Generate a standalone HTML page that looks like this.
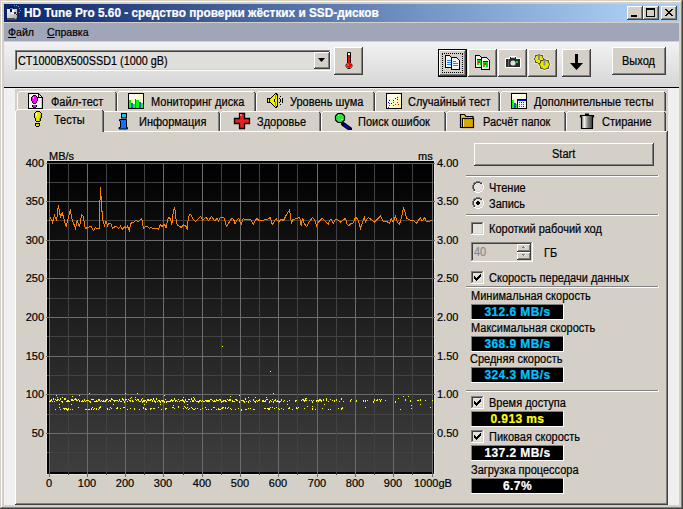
<!DOCTYPE html><html><head><meta charset="utf-8"><style>
html,body{margin:0;padding:0;width:683px;height:509px;overflow:hidden;background:#d4d0c8}
div{position:absolute;box-sizing:border-box}
.t{white-space:pre;font-family:"Liberation Sans",sans-serif;line-height:13px;-webkit-text-stroke:0.2px currentColor}
</style></head><body><div style="left:0px;top:0px;width:683px;height:509px;background:#404040;"></div><div style="left:0px;top:0px;width:682px;height:508px;background:#d4d0c8;"></div><div style="left:1px;top:1px;width:681px;height:507px;background:#808080;"></div><div style="left:1px;top:1px;width:680px;height:506px;background:#ffffff;"></div><div style="left:2px;top:2px;width:679px;height:505px;background:#d4d0c8;"></div><div style="left:4px;top:4px;width:675px;height:18px;background:linear-gradient(to right,#0a246a 0px,#a6caf0 620px);"></div><svg style="position:absolute;left:5px;top:5px" width="17" height="16" viewBox="0 0 17 16" shape-rendering="crispEdges"><defs><linearGradient id="ai" x1="0" y1="0" x2="1" y2="1"><stop offset="0" stop-color="#f4f4f4"/><stop offset="1" stop-color="#a8a8a8"/></linearGradient></defs><rect x="2" y="4" width="10" height="10" fill="url(#ai)"/><rect x="2" y="13" width="10" height="2" fill="#4a4a4a"/><rect x="10" y="13" width="1" height="1" fill="#c0c040"/><rect x="4" y="2" width="5" height="2" fill="#101018"/><rect x="5" y="3" width="3" height="1" fill="#5878c8"/><rect x="5" y="4" width="2" height="3" fill="#181818"/><rect x="7" y="5" width="2" height="2" fill="#ffffff"/><rect x="6" y="8" width="3" height="1" fill="#ffffff"/><rect x="9" y="7" width="2" height="2" fill="#303030"/><rect x="11" y="9" width="1" height="1" fill="#202020"/><rect x="13" y="10" width="1" height="1" fill="#202020"/><rect x="12" y="9" width="1" height="1" fill="#404080"/><rect x="9" y="0" width="1" height="1" fill="#9098b0"/><rect x="11" y="0" width="1" height="1" fill="#9098b0"/><rect x="13" y="1" width="1" height="1" fill="#9098b0"/><rect x="14" y="3" width="1" height="1" fill="#9098b0"/><rect x="15" y="5" width="1" height="1" fill="#9098b0"/><rect x="14" y="7" width="1" height="1" fill="#9098b0"/></svg><div class="t" style="left:24px;top:7px;font-size:12.3px;transform:scaleX(0.961);transform-origin:0 0;color:#fff;font-weight:700">HD Tune Pro 5.60 - средство проверки жёстких и SSD-дисков</div><div style="left:627px;top:6px;width:16px;height:14px;background:#404040;"></div><div style="left:627px;top:6px;width:15px;height:13px;background:#ffffff;"></div><div style="left:628px;top:7px;width:14px;height:12px;background:#808080;"></div><div style="left:628px;top:7px;width:13px;height:11px;background:#d4d0c8;"></div><div style="left:643px;top:6px;width:16px;height:14px;background:#404040;"></div><div style="left:643px;top:6px;width:15px;height:13px;background:#ffffff;"></div><div style="left:644px;top:7px;width:14px;height:12px;background:#808080;"></div><div style="left:644px;top:7px;width:13px;height:11px;background:#d4d0c8;"></div><div style="left:661px;top:6px;width:16px;height:14px;background:#404040;"></div><div style="left:661px;top:6px;width:15px;height:13px;background:#ffffff;"></div><div style="left:662px;top:7px;width:14px;height:12px;background:#808080;"></div><div style="left:662px;top:7px;width:13px;height:11px;background:#d4d0c8;"></div><div style="left:631px;top:15px;width:6px;height:2px;background:#000;"></div><div style="left:646px;top:8px;width:9px;height:9px;background:#000;"></div><div style="left:647px;top:10px;width:7px;height:6px;background:#d4d0c8;"></div><svg style="position:absolute;left:665px;top:9px" width="8" height="7" viewBox="0 0 8 7" shape-rendering="crispEdges"><rect x="0" y="0" width="1" height="1" fill="#000"/><rect x="1" y="0" width="1" height="1" fill="#000"/><rect x="6" y="0" width="1" height="1" fill="#000"/><rect x="7" y="0" width="1" height="1" fill="#000"/><rect x="1" y="1" width="1" height="1" fill="#000"/><rect x="2" y="1" width="1" height="1" fill="#000"/><rect x="5" y="1" width="1" height="1" fill="#000"/><rect x="6" y="1" width="1" height="1" fill="#000"/><rect x="2" y="2" width="1" height="1" fill="#000"/><rect x="3" y="2" width="1" height="1" fill="#000"/><rect x="4" y="2" width="1" height="1" fill="#000"/><rect x="5" y="2" width="1" height="1" fill="#000"/><rect x="3" y="3" width="1" height="1" fill="#000"/><rect x="4" y="3" width="1" height="1" fill="#000"/><rect x="2" y="4" width="1" height="1" fill="#000"/><rect x="3" y="4" width="1" height="1" fill="#000"/><rect x="4" y="4" width="1" height="1" fill="#000"/><rect x="5" y="4" width="1" height="1" fill="#000"/><rect x="1" y="5" width="1" height="1" fill="#000"/><rect x="2" y="5" width="1" height="1" fill="#000"/><rect x="5" y="5" width="1" height="1" fill="#000"/><rect x="6" y="5" width="1" height="1" fill="#000"/><rect x="0" y="6" width="1" height="1" fill="#000"/><rect x="1" y="6" width="1" height="1" fill="#000"/><rect x="6" y="6" width="1" height="1" fill="#000"/><rect x="7" y="6" width="1" height="1" fill="#000"/></svg><div style="left:4px;top:23px;width:675px;height:18px;background:#a0a6b8;"></div><div class="t" style="left:8px;top:26px;font-size:10.6px;color:#000;font-weight:400;"><u>Ф</u>айл</div><div class="t" style="left:47px;top:26px;font-size:10.6px;color:#000;font-weight:400;"><u>С</u>правка</div><div style="left:4px;top:41px;width:675px;height:1px;background:#d4d0c8;"></div><div style="left:4px;top:42px;width:675px;height:45px;background:linear-gradient(to bottom,#f2f2f2,#d6d6d6);"></div><div style="left:4px;top:87px;width:675px;height:1px;background:#000;"></div><div style="left:15px;top:50px;width:316px;height:21px;background:#ffffff;"></div><div style="left:15px;top:50px;width:315px;height:20px;background:#808080;"></div><div style="left:16px;top:51px;width:314px;height:19px;background:#d4d0c8;"></div><div style="left:16px;top:51px;width:313px;height:18px;background:#404040;"></div><div style="left:17px;top:52px;width:312px;height:17px;background:#e0deda;"></div><div class="t" style="left:18px;top:55px;font-size:12px;transform:scaleX(0.9);transform-origin:0 0;color:#000;font-weight:400;">CT1000BX500SSD1 (1000 gB)</div><div style="left:314px;top:52px;width:16px;height:17px;background:#404040;"></div><div style="left:314px;top:52px;width:15px;height:16px;background:#ffffff;"></div><div style="left:315px;top:53px;width:14px;height:15px;background:#808080;"></div><div style="left:315px;top:53px;width:13px;height:14px;background:#d4d0c8;"></div><svg style="position:absolute;left:318px;top:58px" width="7" height="4" viewBox="0 0 7 4"><path d="M0 0h7L3.5 4z" fill="#000"/></svg><div style="left:334px;top:47px;width:29px;height:28px;background:#404040;"></div><div style="left:334px;top:47px;width:28px;height:27px;background:#ffffff;"></div><div style="left:335px;top:48px;width:27px;height:26px;background:#808080;"></div><div style="left:335px;top:48px;width:26px;height:25px;background:#d4d0c8;"></div><svg style="position:absolute;left:344px;top:51px" width="10" height="19" viewBox="0 0 10 19"><path d="M3.5 1.5h3v10.5a3 3 0 1 1 -3 0z" fill="#fff" stroke="#000" stroke-width="1"/><rect x="4" y="4" width="2" height="9" fill="#ff0000"/><circle cx="5" cy="14.5" r="2.5" fill="#ff0000"/><rect x="3.5" y="13.5" width="1" height="1" fill="#fff"/></svg><div style="left:438px;top:49px;width:29px;height:28px;background:#000;"></div><div style="left:439px;top:50px;width:27px;height:26px;background:#404040;"></div><div style="left:439px;top:50px;width:26px;height:25px;background:#ffffff;"></div><div style="left:440px;top:51px;width:25px;height:24px;background:#808080;"></div><div style="left:440px;top:51px;width:24px;height:23px;background:#d4d0c8;"></div><div style="left:442px;top:53px;width:21px;height:20px;border:1px dotted #000"></div><div style="left:468px;top:49px;width:29px;height:28px;background:#404040;"></div><div style="left:468px;top:49px;width:28px;height:27px;background:#ffffff;"></div><div style="left:469px;top:50px;width:27px;height:26px;background:#808080;"></div><div style="left:469px;top:50px;width:26px;height:25px;background:#d4d0c8;"></div><div style="left:498px;top:49px;width:29px;height:28px;background:#404040;"></div><div style="left:498px;top:49px;width:28px;height:27px;background:#ffffff;"></div><div style="left:499px;top:50px;width:27px;height:26px;background:#808080;"></div><div style="left:499px;top:50px;width:26px;height:25px;background:#d4d0c8;"></div><div style="left:528px;top:49px;width:29px;height:28px;background:#404040;"></div><div style="left:528px;top:49px;width:28px;height:27px;background:#ffffff;"></div><div style="left:529px;top:50px;width:27px;height:26px;background:#808080;"></div><div style="left:529px;top:50px;width:26px;height:25px;background:#d4d0c8;"></div><div style="left:562px;top:49px;width:29px;height:28px;background:#404040;"></div><div style="left:562px;top:49px;width:28px;height:27px;background:#ffffff;"></div><div style="left:563px;top:50px;width:27px;height:26px;background:#808080;"></div><div style="left:563px;top:50px;width:26px;height:25px;background:#d4d0c8;"></div><div style="left:612px;top:47px;width:54px;height:28px;background:#404040;"></div><div style="left:612px;top:47px;width:53px;height:27px;background:#ffffff;"></div><div style="left:613px;top:48px;width:52px;height:26px;background:#808080;"></div><div style="left:613px;top:48px;width:51px;height:25px;background:#d4d0c8;"></div><div class="t" style="left:622px;top:55px;font-size:12px;transform:scaleX(0.917);transform-origin:0 0;color:#000;font-weight:400;">Выход</div><svg style="position:absolute;left:444px;top:55px" width="18" height="16" viewBox="0 0 18 16" shape-rendering="crispEdges"><path d="M1.5 0.5h4l3 3v9h-7z" fill="#f4f4f4" stroke="#000"/><rect x="3" y="5" width="4" height="1" fill="#2080ff"/><rect x="3" y="7" width="4" height="1" fill="#2080ff"/><rect x="3" y="9" width="4" height="1" fill="#2080ff"/><path d="M7.5 2.5h5l3 3v9h-8z" fill="#f4f4f4" stroke="#000"/><rect x="9" y="6" width="3" height="1" fill="#2080ff"/><rect x="9" y="8" width="5" height="1" fill="#2080ff"/><rect x="9" y="10" width="5" height="1" fill="#2080ff"/></svg><svg style="position:absolute;left:474px;top:55px" width="18" height="16" viewBox="0 0 18 16" shape-rendering="crispEdges"><path d="M1.5 0.5h4l3 3v9h-7z" fill="#f4f4f4" stroke="#000"/><rect x="3" y="4" width="4" height="1" fill="#0000ff"/><rect x="3" y="5" width="4" height="5" fill="#00e000"/><rect x="4" y="6" width="2" height="2" fill="#ff2000"/><rect x="5" y="8" width="1" height="2" fill="#f0f000"/><path d="M7.5 2.5h5l3 3v9h-8z" fill="#f4f4f4" stroke="#000"/><rect x="9" y="6" width="5" height="1" fill="#0000ff"/><rect x="9" y="7" width="5" height="5" fill="#00e000"/><rect x="10" y="8" width="2" height="2" fill="#ff2000"/><rect x="11" y="10" width="1" height="2" fill="#f0f000"/></svg><svg style="position:absolute;left:503px;top:54px" width="20" height="16" viewBox="0 0 20 16"><path d="M2 4h4l1-2h6l1 2h4v10H2z" fill="#fff"/><rect x="3" y="5" width="14" height="8" fill="#2a2a2a"/><rect x="7" y="3" width="6" height="2" fill="#2a2a2a"/><rect x="8" y="3" width="4" height="1" fill="#cfcfcf"/><rect x="5" y="5" width="1" height="8" fill="#666"/><circle cx="10" cy="9" r="2.6" fill="#e0e0e0"/><rect x="13" y="7" width="2" height="2" fill="#00e020"/></svg><svg style="position:absolute;left:532px;top:53px" width="20" height="19" viewBox="0 0 20 19"><polygon points="12.20,6.00 10.60,7.49 10.68,9.68 8.49,9.60 7.00,11.20 5.51,9.60 3.32,9.68 3.40,7.49 1.80,6.00 3.40,4.51 3.32,2.32 5.51,2.40 7.00,0.80 8.49,2.40 10.68,2.32 10.60,4.51" fill="#fff" stroke="#fff" stroke-width="2"/><polygon points="18.10,11.50 16.38,13.11 16.46,15.46 14.11,15.38 12.50,17.10 10.89,15.38 8.54,15.46 8.62,13.11 6.90,11.50 8.62,9.89 8.54,7.54 10.89,7.62 12.50,5.90 14.11,7.62 16.46,7.54 16.38,9.89" fill="#fff" stroke="#fff" stroke-width="2"/><polygon points="12.20,6.00 10.60,7.49 10.68,9.68 8.49,9.60 7.00,11.20 5.51,9.60 3.32,9.68 3.40,7.49 1.80,6.00 3.40,4.51 3.32,2.32 5.51,2.40 7.00,0.80 8.49,2.40 10.68,2.32 10.60,4.51" fill="#e8e800" stroke="#303000" stroke-width="0.9"/><polygon points="18.10,11.50 16.38,13.11 16.46,15.46 14.11,15.38 12.50,17.10 10.89,15.38 8.54,15.46 8.62,13.11 6.90,11.50 8.62,9.89 8.54,7.54 10.89,7.62 12.50,5.90 14.11,7.62 16.46,7.54 16.38,9.89" fill="#e8e800" stroke="#303000" stroke-width="0.9"/><rect x="6" y="1.5" width="2" height="5.5" fill="#8a8aa8"/><rect x="11.5" y="7" width="2" height="5.5" fill="#8a8aa8"/></svg><svg style="position:absolute;left:569px;top:53px" width="15" height="18" viewBox="0 0 15 18"><rect x="6" y="1" width="3" height="9" fill="#000"/><path d="M1 10h13l-6.5 7z" fill="#000"/></svg><div style="left:4px;top:88px;width:675px;height:417px;background:#f0f0f0;"></div><div style="left:15px;top:89px;width:653px;height:416px;background:#d4d0c8;"></div><div style="left:17px;top:91px;width:100px;height:20px;background:#d4d0c8;"></div><div style="left:17px;top:93px;width:1px;height:18px;background:#ffffff;"></div><div style="left:18px;top:92px;width:1px;height:1px;background:#ffffff;"></div><div style="left:19px;top:91px;width:96px;height:1px;background:#ffffff;"></div><div style="left:115px;top:92px;width:1px;height:1px;background:#404040;"></div><div style="left:116px;top:93px;width:1px;height:18px;background:#404040;"></div><div style="left:115px;top:93px;width:1px;height:18px;background:#808080;"></div><div style="left:117px;top:91px;width:139px;height:20px;background:#d4d0c8;"></div><div style="left:117px;top:93px;width:1px;height:18px;background:#ffffff;"></div><div style="left:118px;top:92px;width:1px;height:1px;background:#ffffff;"></div><div style="left:119px;top:91px;width:135px;height:1px;background:#ffffff;"></div><div style="left:254px;top:92px;width:1px;height:1px;background:#404040;"></div><div style="left:255px;top:93px;width:1px;height:18px;background:#404040;"></div><div style="left:254px;top:93px;width:1px;height:18px;background:#808080;"></div><div style="left:256px;top:91px;width:119px;height:20px;background:#d4d0c8;"></div><div style="left:256px;top:93px;width:1px;height:18px;background:#ffffff;"></div><div style="left:257px;top:92px;width:1px;height:1px;background:#ffffff;"></div><div style="left:258px;top:91px;width:115px;height:1px;background:#ffffff;"></div><div style="left:373px;top:92px;width:1px;height:1px;background:#404040;"></div><div style="left:374px;top:93px;width:1px;height:18px;background:#404040;"></div><div style="left:373px;top:93px;width:1px;height:18px;background:#808080;"></div><div style="left:375px;top:91px;width:125px;height:20px;background:#d4d0c8;"></div><div style="left:375px;top:93px;width:1px;height:18px;background:#ffffff;"></div><div style="left:376px;top:92px;width:1px;height:1px;background:#ffffff;"></div><div style="left:377px;top:91px;width:121px;height:1px;background:#ffffff;"></div><div style="left:498px;top:92px;width:1px;height:1px;background:#404040;"></div><div style="left:499px;top:93px;width:1px;height:18px;background:#404040;"></div><div style="left:498px;top:93px;width:1px;height:18px;background:#808080;"></div><div style="left:500px;top:91px;width:166px;height:20px;background:#d4d0c8;"></div><div style="left:500px;top:93px;width:1px;height:18px;background:#ffffff;"></div><div style="left:501px;top:92px;width:1px;height:1px;background:#ffffff;"></div><div style="left:502px;top:91px;width:162px;height:1px;background:#ffffff;"></div><div style="left:664px;top:92px;width:1px;height:1px;background:#404040;"></div><div style="left:665px;top:93px;width:1px;height:18px;background:#404040;"></div><div style="left:664px;top:93px;width:1px;height:18px;background:#808080;"></div><div style="left:102px;top:111px;width:118px;height:20px;background:#d4d0c8;"></div><div style="left:102px;top:113px;width:1px;height:18px;background:#ffffff;"></div><div style="left:103px;top:112px;width:1px;height:1px;background:#ffffff;"></div><div style="left:104px;top:111px;width:114px;height:1px;background:#ffffff;"></div><div style="left:218px;top:112px;width:1px;height:1px;background:#404040;"></div><div style="left:219px;top:113px;width:1px;height:18px;background:#404040;"></div><div style="left:218px;top:113px;width:1px;height:18px;background:#808080;"></div><div style="left:220px;top:111px;width:101px;height:20px;background:#d4d0c8;"></div><div style="left:220px;top:113px;width:1px;height:18px;background:#ffffff;"></div><div style="left:221px;top:112px;width:1px;height:1px;background:#ffffff;"></div><div style="left:222px;top:111px;width:97px;height:1px;background:#ffffff;"></div><div style="left:319px;top:112px;width:1px;height:1px;background:#404040;"></div><div style="left:320px;top:113px;width:1px;height:18px;background:#404040;"></div><div style="left:319px;top:113px;width:1px;height:18px;background:#808080;"></div><div style="left:321px;top:111px;width:125px;height:20px;background:#d4d0c8;"></div><div style="left:321px;top:113px;width:1px;height:18px;background:#ffffff;"></div><div style="left:322px;top:112px;width:1px;height:1px;background:#ffffff;"></div><div style="left:323px;top:111px;width:121px;height:1px;background:#ffffff;"></div><div style="left:444px;top:112px;width:1px;height:1px;background:#404040;"></div><div style="left:445px;top:113px;width:1px;height:18px;background:#404040;"></div><div style="left:444px;top:113px;width:1px;height:18px;background:#808080;"></div><div style="left:446px;top:111px;width:120px;height:20px;background:#d4d0c8;"></div><div style="left:446px;top:113px;width:1px;height:18px;background:#ffffff;"></div><div style="left:447px;top:112px;width:1px;height:1px;background:#ffffff;"></div><div style="left:448px;top:111px;width:116px;height:1px;background:#ffffff;"></div><div style="left:564px;top:112px;width:1px;height:1px;background:#404040;"></div><div style="left:565px;top:113px;width:1px;height:18px;background:#404040;"></div><div style="left:564px;top:113px;width:1px;height:18px;background:#808080;"></div><div style="left:566px;top:111px;width:100px;height:20px;background:#d4d0c8;"></div><div style="left:566px;top:113px;width:1px;height:18px;background:#ffffff;"></div><div style="left:567px;top:112px;width:1px;height:1px;background:#ffffff;"></div><div style="left:568px;top:111px;width:96px;height:1px;background:#ffffff;"></div><div style="left:664px;top:112px;width:1px;height:1px;background:#404040;"></div><div style="left:665px;top:113px;width:1px;height:18px;background:#404040;"></div><div style="left:664px;top:113px;width:1px;height:18px;background:#808080;"></div><div style="left:15px;top:131px;width:653px;height:374px;background:#d4d0c8;"></div><div style="left:15px;top:131px;width:652px;height:1px;background:#ffffff;"></div><div style="left:15px;top:131px;width:1px;height:373px;background:#ffffff;"></div><div style="left:666px;top:132px;width:1px;height:372px;background:#808080;"></div><div style="left:667px;top:131px;width:1px;height:374px;background:#404040;"></div><div style="left:16px;top:503px;width:651px;height:1px;background:#808080;"></div><div style="left:15px;top:504px;width:653px;height:1px;background:#404040;"></div><div style="left:15px;top:109px;width:89px;height:23px;background:#d4d0c8;"></div><div style="left:15px;top:111px;width:1px;height:21px;background:#ffffff;"></div><div style="left:16px;top:110px;width:1px;height:1px;background:#ffffff;"></div><div style="left:17px;top:109px;width:85px;height:1px;background:#ffffff;"></div><div style="left:102px;top:110px;width:1px;height:1px;background:#404040;"></div><div style="left:103px;top:111px;width:1px;height:21px;background:#404040;"></div><div style="left:102px;top:111px;width:1px;height:21px;background:#808080;"></div><div class="t" style="left:51px;top:96px;font-size:12px;transform:scaleX(0.917);transform-origin:0 0;color:#000;font-weight:400;">Файл-тест</div><div class="t" style="left:151px;top:96px;font-size:12px;transform:scaleX(0.917);transform-origin:0 0;color:#000;font-weight:400;">Мониторинг диска</div><div class="t" style="left:290px;top:96px;font-size:12px;transform:scaleX(0.917);transform-origin:0 0;color:#000;font-weight:400;">Уровень шума</div><div class="t" style="left:408px;top:96px;font-size:12px;transform:scaleX(0.917);transform-origin:0 0;color:#000;font-weight:400;">Случайный тест</div><div class="t" style="left:534px;top:96px;font-size:12px;transform:scaleX(0.917);transform-origin:0 0;color:#000;font-weight:400;">Дополнительные тесты</div><div class="t" style="left:54px;top:114px;font-size:12px;transform:scaleX(0.917);transform-origin:0 0;color:#000;font-weight:400;">Тесты</div><div class="t" style="left:139px;top:116px;font-size:12px;transform:scaleX(0.917);transform-origin:0 0;color:#000;font-weight:400;">Информация</div><div class="t" style="left:257px;top:116px;font-size:12px;transform:scaleX(0.917);transform-origin:0 0;color:#000;font-weight:400;">Здоровье</div><div class="t" style="left:358px;top:116px;font-size:12px;transform:scaleX(0.917);transform-origin:0 0;color:#000;font-weight:400;">Поиск ошибок</div><div class="t" style="left:483px;top:116px;font-size:12px;transform:scaleX(0.917);transform-origin:0 0;color:#000;font-weight:400;">Расчёт папок</div><div class="t" style="left:602px;top:116px;font-size:12px;transform:scaleX(0.917);transform-origin:0 0;color:#000;font-weight:400;">Стирание</div><svg style="position:absolute;left:28px;top:93px" width="15" height="16" viewBox="0 0 15 16" shape-rendering="crispEdges"><rect x="0" y="0" width="1" height="1" fill="#000"/><rect x="1" y="0" width="1" height="1" fill="#000"/><rect x="2" y="0" width="1" height="1" fill="#000"/><rect x="3" y="0" width="1" height="1" fill="#000"/><rect x="4" y="0" width="1" height="1" fill="#000"/><rect x="5" y="0" width="1" height="1" fill="#000"/><rect x="6" y="0" width="1" height="1" fill="#000"/><rect x="7" y="0" width="1" height="1" fill="#000"/><rect x="8" y="0" width="1" height="1" fill="#000"/><rect x="9" y="0" width="1" height="1" fill="#000"/><rect x="10" y="0" width="1" height="1" fill="#000"/><rect x="0" y="1" width="1" height="1" fill="#000"/><rect x="1" y="1" width="1" height="1" fill="#f4f4f4"/><rect x="2" y="1" width="1" height="1" fill="#f4f4f4"/><rect x="3" y="1" width="1" height="1" fill="#f4f4f4"/><rect x="4" y="1" width="1" height="1" fill="#f4f4f4"/><rect x="5" y="1" width="1" height="1" fill="#f4f4f4"/><rect x="6" y="1" width="1" height="1" fill="#f4f4f4"/><rect x="7" y="1" width="1" height="1" fill="#f4f4f4"/><rect x="8" y="1" width="1" height="1" fill="#f4f4f4"/><rect x="9" y="1" width="1" height="1" fill="#f4f4f4"/><rect x="10" y="1" width="1" height="1" fill="#000"/><rect x="11" y="1" width="1" height="1" fill="#000"/><rect x="0" y="2" width="1" height="1" fill="#000"/><rect x="1" y="2" width="1" height="1" fill="#f4f4f4"/><rect x="2" y="2" width="1" height="1" fill="#f4f4f4"/><rect x="3" y="2" width="1" height="1" fill="#f4f4f4"/><rect x="4" y="2" width="1" height="1" fill="#f4f4f4"/><rect x="5" y="2" width="1" height="1" fill="#000"/><rect x="6" y="2" width="1" height="1" fill="#000"/><rect x="7" y="2" width="1" height="1" fill="#000"/><rect x="8" y="2" width="1" height="1" fill="#f4f4f4"/><rect x="9" y="2" width="1" height="1" fill="#f4f4f4"/><rect x="10" y="2" width="1" height="1" fill="#000"/><rect x="11" y="2" width="1" height="1" fill="#f4f4f4"/><rect x="12" y="2" width="1" height="1" fill="#000"/><rect x="0" y="3" width="1" height="1" fill="#000"/><rect x="1" y="3" width="1" height="1" fill="#f4f4f4"/><rect x="2" y="3" width="1" height="1" fill="#f4f4f4"/><rect x="3" y="3" width="1" height="1" fill="#f4f4f4"/><rect x="4" y="3" width="1" height="1" fill="#000"/><rect x="5" y="3" width="1" height="1" fill="#ff00ff"/><rect x="6" y="3" width="1" height="1" fill="#ff00ff"/><rect x="7" y="3" width="1" height="1" fill="#ff00ff"/><rect x="8" y="3" width="1" height="1" fill="#000"/><rect x="9" y="3" width="1" height="1" fill="#f4f4f4"/><rect x="10" y="3" width="1" height="1" fill="#000"/><rect x="11" y="3" width="1" height="1" fill="#f4f4f4"/><rect x="12" y="3" width="1" height="1" fill="#f4f4f4"/><rect x="13" y="3" width="1" height="1" fill="#000"/><rect x="0" y="4" width="1" height="1" fill="#000"/><rect x="1" y="4" width="1" height="1" fill="#f4f4f4"/><rect x="2" y="4" width="1" height="1" fill="#f4f4f4"/><rect x="3" y="4" width="1" height="1" fill="#000"/><rect x="4" y="4" width="1" height="1" fill="#ff00ff"/><rect x="5" y="4" width="1" height="1" fill="#ffa0ff"/><rect x="6" y="4" width="1" height="1" fill="#ff00ff"/><rect x="7" y="4" width="1" height="1" fill="#ff00ff"/><rect x="8" y="4" width="1" height="1" fill="#ff00ff"/><rect x="9" y="4" width="1" height="1" fill="#000"/><rect x="10" y="4" width="1" height="1" fill="#000"/><rect x="11" y="4" width="1" height="1" fill="#000"/><rect x="12" y="4" width="1" height="1" fill="#000"/><rect x="13" y="4" width="1" height="1" fill="#000"/><rect x="14" y="4" width="1" height="1" fill="#000"/><rect x="0" y="5" width="1" height="1" fill="#000"/><rect x="1" y="5" width="1" height="1" fill="#f4f4f4"/><rect x="2" y="5" width="1" height="1" fill="#f4f4f4"/><rect x="3" y="5" width="1" height="1" fill="#000"/><rect x="4" y="5" width="1" height="1" fill="#ff00ff"/><rect x="5" y="5" width="1" height="1" fill="#ffa0ff"/><rect x="6" y="5" width="1" height="1" fill="#ff00ff"/><rect x="7" y="5" width="1" height="1" fill="#ff00ff"/><rect x="8" y="5" width="1" height="1" fill="#ff00ff"/><rect x="9" y="5" width="1" height="1" fill="#000"/><rect x="10" y="5" width="1" height="1" fill="#f4f4f4"/><rect x="11" y="5" width="1" height="1" fill="#f4f4f4"/><rect x="12" y="5" width="1" height="1" fill="#f4f4f4"/><rect x="13" y="5" width="1" height="1" fill="#c8c8c8"/><rect x="14" y="5" width="1" height="1" fill="#000"/><rect x="0" y="6" width="1" height="1" fill="#000"/><rect x="1" y="6" width="1" height="1" fill="#f4f4f4"/><rect x="2" y="6" width="1" height="1" fill="#f4f4f4"/><rect x="3" y="6" width="1" height="1" fill="#000"/><rect x="4" y="6" width="1" height="1" fill="#ff00ff"/><rect x="5" y="6" width="1" height="1" fill="#ff00ff"/><rect x="6" y="6" width="1" height="1" fill="#ff00ff"/><rect x="7" y="6" width="1" height="1" fill="#ff00ff"/><rect x="8" y="6" width="1" height="1" fill="#ff00ff"/><rect x="9" y="6" width="1" height="1" fill="#000"/><rect x="10" y="6" width="1" height="1" fill="#f4f4f4"/><rect x="11" y="6" width="1" height="1" fill="#f4f4f4"/><rect x="12" y="6" width="1" height="1" fill="#f4f4f4"/><rect x="13" y="6" width="1" height="1" fill="#c8c8c8"/><rect x="14" y="6" width="1" height="1" fill="#000"/><rect x="0" y="7" width="1" height="1" fill="#000"/><rect x="1" y="7" width="1" height="1" fill="#f4f4f4"/><rect x="2" y="7" width="1" height="1" fill="#f4f4f4"/><rect x="3" y="7" width="1" height="1" fill="#000"/><rect x="4" y="7" width="1" height="1" fill="#ff00ff"/><rect x="5" y="7" width="1" height="1" fill="#ff00ff"/><rect x="6" y="7" width="1" height="1" fill="#ff00ff"/><rect x="7" y="7" width="1" height="1" fill="#ff00ff"/><rect x="8" y="7" width="1" height="1" fill="#ff00ff"/><rect x="9" y="7" width="1" height="1" fill="#000"/><rect x="10" y="7" width="1" height="1" fill="#f4f4f4"/><rect x="11" y="7" width="1" height="1" fill="#f4f4f4"/><rect x="12" y="7" width="1" height="1" fill="#f4f4f4"/><rect x="13" y="7" width="1" height="1" fill="#c8c8c8"/><rect x="14" y="7" width="1" height="1" fill="#000"/><rect x="0" y="8" width="1" height="1" fill="#000"/><rect x="1" y="8" width="1" height="1" fill="#f4f4f4"/><rect x="2" y="8" width="1" height="1" fill="#f4f4f4"/><rect x="3" y="8" width="1" height="1" fill="#f4f4f4"/><rect x="4" y="8" width="1" height="1" fill="#000"/><rect x="5" y="8" width="1" height="1" fill="#ff00ff"/><rect x="6" y="8" width="1" height="1" fill="#ff00ff"/><rect x="7" y="8" width="1" height="1" fill="#ff00ff"/><rect x="8" y="8" width="1" height="1" fill="#000"/><rect x="9" y="8" width="1" height="1" fill="#f4f4f4"/><rect x="10" y="8" width="1" height="1" fill="#f4f4f4"/><rect x="11" y="8" width="1" height="1" fill="#f4f4f4"/><rect x="12" y="8" width="1" height="1" fill="#f4f4f4"/><rect x="13" y="8" width="1" height="1" fill="#c8c8c8"/><rect x="14" y="8" width="1" height="1" fill="#000"/><rect x="0" y="9" width="1" height="1" fill="#000"/><rect x="1" y="9" width="1" height="1" fill="#f4f4f4"/><rect x="2" y="9" width="1" height="1" fill="#f4f4f4"/><rect x="3" y="9" width="1" height="1" fill="#f4f4f4"/><rect x="4" y="9" width="1" height="1" fill="#000"/><rect x="5" y="9" width="1" height="1" fill="#ff00ff"/><rect x="6" y="9" width="1" height="1" fill="#ff00ff"/><rect x="7" y="9" width="1" height="1" fill="#ff00ff"/><rect x="8" y="9" width="1" height="1" fill="#000"/><rect x="9" y="9" width="1" height="1" fill="#f4f4f4"/><rect x="10" y="9" width="1" height="1" fill="#f4f4f4"/><rect x="11" y="9" width="1" height="1" fill="#f4f4f4"/><rect x="12" y="9" width="1" height="1" fill="#f4f4f4"/><rect x="13" y="9" width="1" height="1" fill="#c8c8c8"/><rect x="14" y="9" width="1" height="1" fill="#000"/><rect x="0" y="10" width="1" height="1" fill="#000"/><rect x="1" y="10" width="1" height="1" fill="#f4f4f4"/><rect x="2" y="10" width="1" height="1" fill="#f4f4f4"/><rect x="3" y="10" width="1" height="1" fill="#f4f4f4"/><rect x="4" y="10" width="1" height="1" fill="#f4f4f4"/><rect x="5" y="10" width="1" height="1" fill="#000"/><rect x="6" y="10" width="1" height="1" fill="#000"/><rect x="7" y="10" width="1" height="1" fill="#000"/><rect x="8" y="10" width="1" height="1" fill="#f4f4f4"/><rect x="9" y="10" width="1" height="1" fill="#f4f4f4"/><rect x="10" y="10" width="1" height="1" fill="#f4f4f4"/><rect x="11" y="10" width="1" height="1" fill="#f4f4f4"/><rect x="12" y="10" width="1" height="1" fill="#f4f4f4"/><rect x="13" y="10" width="1" height="1" fill="#c8c8c8"/><rect x="14" y="10" width="1" height="1" fill="#000"/><rect x="0" y="11" width="1" height="1" fill="#000"/><rect x="1" y="11" width="1" height="1" fill="#f4f4f4"/><rect x="2" y="11" width="1" height="1" fill="#f4f4f4"/><rect x="3" y="11" width="1" height="1" fill="#f4f4f4"/><rect x="4" y="11" width="1" height="1" fill="#f4f4f4"/><rect x="5" y="11" width="1" height="1" fill="#f4f4f4"/><rect x="6" y="11" width="1" height="1" fill="#f4f4f4"/><rect x="7" y="11" width="1" height="1" fill="#f4f4f4"/><rect x="8" y="11" width="1" height="1" fill="#f4f4f4"/><rect x="9" y="11" width="1" height="1" fill="#f4f4f4"/><rect x="10" y="11" width="1" height="1" fill="#f4f4f4"/><rect x="11" y="11" width="1" height="1" fill="#f4f4f4"/><rect x="12" y="11" width="1" height="1" fill="#f4f4f4"/><rect x="13" y="11" width="1" height="1" fill="#c8c8c8"/><rect x="14" y="11" width="1" height="1" fill="#000"/><rect x="0" y="12" width="1" height="1" fill="#000"/><rect x="1" y="12" width="1" height="1" fill="#f4f4f4"/><rect x="2" y="12" width="1" height="1" fill="#f4f4f4"/><rect x="3" y="12" width="1" height="1" fill="#f4f4f4"/><rect x="4" y="12" width="1" height="1" fill="#000"/><rect x="5" y="12" width="1" height="1" fill="#ff00ff"/><rect x="6" y="12" width="1" height="1" fill="#ff00ff"/><rect x="7" y="12" width="1" height="1" fill="#ff00ff"/><rect x="8" y="12" width="1" height="1" fill="#000"/><rect x="9" y="12" width="1" height="1" fill="#f4f4f4"/><rect x="10" y="12" width="1" height="1" fill="#f4f4f4"/><rect x="11" y="12" width="1" height="1" fill="#f4f4f4"/><rect x="12" y="12" width="1" height="1" fill="#f4f4f4"/><rect x="13" y="12" width="1" height="1" fill="#c8c8c8"/><rect x="14" y="12" width="1" height="1" fill="#000"/><rect x="0" y="13" width="1" height="1" fill="#000"/><rect x="1" y="13" width="1" height="1" fill="#f4f4f4"/><rect x="2" y="13" width="1" height="1" fill="#f4f4f4"/><rect x="3" y="13" width="1" height="1" fill="#f4f4f4"/><rect x="4" y="13" width="1" height="1" fill="#000"/><rect x="5" y="13" width="1" height="1" fill="#ff00ff"/><rect x="6" y="13" width="1" height="1" fill="#ff00ff"/><rect x="7" y="13" width="1" height="1" fill="#ff00ff"/><rect x="8" y="13" width="1" height="1" fill="#000"/><rect x="9" y="13" width="1" height="1" fill="#f4f4f4"/><rect x="10" y="13" width="1" height="1" fill="#f4f4f4"/><rect x="11" y="13" width="1" height="1" fill="#f4f4f4"/><rect x="12" y="13" width="1" height="1" fill="#f4f4f4"/><rect x="13" y="13" width="1" height="1" fill="#c8c8c8"/><rect x="14" y="13" width="1" height="1" fill="#000"/><rect x="0" y="14" width="1" height="1" fill="#000"/><rect x="1" y="14" width="1" height="1" fill="#f4f4f4"/><rect x="2" y="14" width="1" height="1" fill="#f4f4f4"/><rect x="3" y="14" width="1" height="1" fill="#f4f4f4"/><rect x="4" y="14" width="1" height="1" fill="#f4f4f4"/><rect x="5" y="14" width="1" height="1" fill="#000"/><rect x="6" y="14" width="1" height="1" fill="#000"/><rect x="7" y="14" width="1" height="1" fill="#000"/><rect x="8" y="14" width="1" height="1" fill="#f4f4f4"/><rect x="9" y="14" width="1" height="1" fill="#f4f4f4"/><rect x="10" y="14" width="1" height="1" fill="#f4f4f4"/><rect x="11" y="14" width="1" height="1" fill="#f4f4f4"/><rect x="12" y="14" width="1" height="1" fill="#f4f4f4"/><rect x="13" y="14" width="1" height="1" fill="#c8c8c8"/><rect x="14" y="14" width="1" height="1" fill="#000"/><rect x="0" y="15" width="1" height="1" fill="#000"/><rect x="1" y="15" width="1" height="1" fill="#000"/><rect x="2" y="15" width="1" height="1" fill="#000"/><rect x="3" y="15" width="1" height="1" fill="#000"/><rect x="4" y="15" width="1" height="1" fill="#000"/><rect x="5" y="15" width="1" height="1" fill="#000"/><rect x="6" y="15" width="1" height="1" fill="#000"/><rect x="7" y="15" width="1" height="1" fill="#000"/><rect x="8" y="15" width="1" height="1" fill="#000"/><rect x="9" y="15" width="1" height="1" fill="#000"/><rect x="10" y="15" width="1" height="1" fill="#000"/><rect x="11" y="15" width="1" height="1" fill="#000"/><rect x="12" y="15" width="1" height="1" fill="#000"/><rect x="13" y="15" width="1" height="1" fill="#000"/><rect x="14" y="15" width="1" height="1" fill="#000"/></svg><svg style="position:absolute;left:128px;top:93px" width="16" height="16" viewBox="0 0 16 16" shape-rendering="crispEdges"><rect x="0" y="0" width="16" height="16" fill="#000"/><rect x="1" y="1" width="14" height="14" fill="#fff8c0"/><defs><linearGradient id="yl" x1="0" y1="0" x2="1" y2="1"><stop offset="0" stop-color="#ffffff"/><stop offset="1" stop-color="#fff5a0"/></linearGradient></defs><rect x="1" y="1" width="14" height="14" fill="url(#yl)"/><rect x="1" y="7" width="2" height="8" fill="#00ff00"/><rect x="3" y="10" width="2" height="5" fill="#4040ff"/><rect x="5" y="11" width="2" height="4" fill="#00ff00"/><rect x="7" y="6" width="1" height="9" fill="#4040ff"/><rect x="8" y="7" width="3" height="8" fill="#00ff00"/><rect x="11" y="9" width="2" height="6" fill="#4040ff"/><rect x="13" y="10" width="2" height="5" fill="#00ff00"/></svg><svg style="position:absolute;left:265px;top:92px" width="19" height="16" viewBox="0 0 19 16" shape-rendering="crispEdges"><rect x="10" y="1" width="1" height="1" fill="#000"/><rect x="11" y="1" width="1" height="1" fill="#000"/><rect x="9" y="2" width="1" height="1" fill="#000"/><rect x="10" y="2" width="1" height="1" fill="#f0f000"/><rect x="11" y="2" width="1" height="1" fill="#000"/><rect x="12" y="2" width="1" height="1" fill="#000"/><rect x="8" y="3" width="1" height="1" fill="#000"/><rect x="9" y="3" width="1" height="1" fill="#f0f000"/><rect x="10" y="3" width="1" height="1" fill="#8a8a20"/><rect x="11" y="3" width="1" height="1" fill="#f0f000"/><rect x="12" y="3" width="1" height="1" fill="#000"/><rect x="7" y="4" width="1" height="1" fill="#000"/><rect x="8" y="4" width="1" height="1" fill="#f0f000"/><rect x="9" y="4" width="1" height="1" fill="#f0f000"/><rect x="10" y="4" width="1" height="1" fill="#8a8a20"/><rect x="11" y="4" width="1" height="1" fill="#f0f000"/><rect x="12" y="4" width="1" height="1" fill="#000"/><rect x="15" y="4" width="1" height="1" fill="#000"/><rect x="6" y="5" width="1" height="1" fill="#000"/><rect x="7" y="5" width="1" height="1" fill="#f0f000"/><rect x="8" y="5" width="1" height="1" fill="#f0f000"/><rect x="9" y="5" width="1" height="1" fill="#f0f000"/><rect x="10" y="5" width="1" height="1" fill="#8a8a20"/><rect x="11" y="5" width="1" height="1" fill="#f0f000"/><rect x="12" y="5" width="1" height="1" fill="#000"/><rect x="2" y="6" width="1" height="1" fill="#000"/><rect x="3" y="6" width="1" height="1" fill="#000"/><rect x="4" y="6" width="1" height="1" fill="#000"/><rect x="5" y="6" width="1" height="1" fill="#000"/><rect x="6" y="6" width="1" height="1" fill="#f0f000"/><rect x="7" y="6" width="1" height="1" fill="#f0f000"/><rect x="8" y="6" width="1" height="1" fill="#f0f000"/><rect x="9" y="6" width="1" height="1" fill="#f0f000"/><rect x="10" y="6" width="1" height="1" fill="#8a8a20"/><rect x="11" y="6" width="1" height="1" fill="#f0f000"/><rect x="12" y="6" width="1" height="1" fill="#000"/><rect x="14" y="6" width="1" height="1" fill="#000"/><rect x="17" y="6" width="1" height="1" fill="#000"/><rect x="2" y="7" width="1" height="1" fill="#000"/><rect x="3" y="7" width="1" height="1" fill="#f0f000"/><rect x="4" y="7" width="1" height="1" fill="#000"/><rect x="5" y="7" width="1" height="1" fill="#f0f000"/><rect x="6" y="7" width="1" height="1" fill="#f0f000"/><rect x="7" y="7" width="1" height="1" fill="#f0f000"/><rect x="8" y="7" width="1" height="1" fill="#f0f000"/><rect x="9" y="7" width="1" height="1" fill="#000"/><rect x="10" y="7" width="1" height="1" fill="#f0f000"/><rect x="11" y="7" width="1" height="1" fill="#f0f000"/><rect x="12" y="7" width="1" height="1" fill="#000"/><rect x="15" y="7" width="1" height="1" fill="#000"/><rect x="17" y="7" width="1" height="1" fill="#000"/><rect x="2" y="8" width="1" height="1" fill="#000"/><rect x="3" y="8" width="1" height="1" fill="#f0f000"/><rect x="4" y="8" width="1" height="1" fill="#000"/><rect x="5" y="8" width="1" height="1" fill="#f0f000"/><rect x="6" y="8" width="1" height="1" fill="#f0f000"/><rect x="7" y="8" width="1" height="1" fill="#f0f000"/><rect x="8" y="8" width="1" height="1" fill="#f0f000"/><rect x="9" y="8" width="1" height="1" fill="#000"/><rect x="10" y="8" width="1" height="1" fill="#f0f000"/><rect x="11" y="8" width="1" height="1" fill="#f0f000"/><rect x="12" y="8" width="1" height="1" fill="#000"/><rect x="15" y="8" width="1" height="1" fill="#000"/><rect x="17" y="8" width="1" height="1" fill="#000"/><rect x="2" y="9" width="1" height="1" fill="#000"/><rect x="3" y="9" width="1" height="1" fill="#f0f000"/><rect x="4" y="9" width="1" height="1" fill="#000"/><rect x="5" y="9" width="1" height="1" fill="#f0f000"/><rect x="6" y="9" width="1" height="1" fill="#f0f000"/><rect x="7" y="9" width="1" height="1" fill="#f0f000"/><rect x="8" y="9" width="1" height="1" fill="#f0f000"/><rect x="9" y="9" width="1" height="1" fill="#000"/><rect x="10" y="9" width="1" height="1" fill="#f0f000"/><rect x="11" y="9" width="1" height="1" fill="#f0f000"/><rect x="12" y="9" width="1" height="1" fill="#000"/><rect x="15" y="9" width="1" height="1" fill="#000"/><rect x="17" y="9" width="1" height="1" fill="#000"/><rect x="2" y="10" width="1" height="1" fill="#000"/><rect x="3" y="10" width="1" height="1" fill="#000"/><rect x="4" y="10" width="1" height="1" fill="#000"/><rect x="5" y="10" width="1" height="1" fill="#000"/><rect x="6" y="10" width="1" height="1" fill="#f0f000"/><rect x="7" y="10" width="1" height="1" fill="#f0f000"/><rect x="8" y="10" width="1" height="1" fill="#f0f000"/><rect x="9" y="10" width="1" height="1" fill="#f0f000"/><rect x="10" y="10" width="1" height="1" fill="#8a8a20"/><rect x="11" y="10" width="1" height="1" fill="#f0f000"/><rect x="12" y="10" width="1" height="1" fill="#000"/><rect x="14" y="10" width="1" height="1" fill="#000"/><rect x="17" y="10" width="1" height="1" fill="#000"/><rect x="6" y="11" width="1" height="1" fill="#000"/><rect x="7" y="11" width="1" height="1" fill="#f0f000"/><rect x="8" y="11" width="1" height="1" fill="#f0f000"/><rect x="9" y="11" width="1" height="1" fill="#f0f000"/><rect x="10" y="11" width="1" height="1" fill="#8a8a20"/><rect x="11" y="11" width="1" height="1" fill="#f0f000"/><rect x="12" y="11" width="1" height="1" fill="#000"/><rect x="7" y="12" width="1" height="1" fill="#000"/><rect x="8" y="12" width="1" height="1" fill="#f0f000"/><rect x="9" y="12" width="1" height="1" fill="#f0f000"/><rect x="10" y="12" width="1" height="1" fill="#8a8a20"/><rect x="11" y="12" width="1" height="1" fill="#f0f000"/><rect x="12" y="12" width="1" height="1" fill="#000"/><rect x="15" y="12" width="1" height="1" fill="#000"/><rect x="8" y="13" width="1" height="1" fill="#000"/><rect x="9" y="13" width="1" height="1" fill="#f0f000"/><rect x="10" y="13" width="1" height="1" fill="#8a8a20"/><rect x="11" y="13" width="1" height="1" fill="#f0f000"/><rect x="12" y="13" width="1" height="1" fill="#000"/><rect x="9" y="14" width="1" height="1" fill="#000"/><rect x="10" y="14" width="1" height="1" fill="#f0f000"/><rect x="11" y="14" width="1" height="1" fill="#000"/><rect x="12" y="14" width="1" height="1" fill="#000"/><rect x="10" y="15" width="1" height="1" fill="#000"/><rect x="11" y="15" width="1" height="1" fill="#000"/></svg><svg style="position:absolute;left:386px;top:93px" width="16" height="16" viewBox="0 0 16 16" shape-rendering="crispEdges"><rect x="0" y="0" width="16" height="16" fill="#000"/><rect x="1" y="1" width="14" height="14" fill="url(#yl)"/><rect x="3" y="7" width="1" height="1" fill="#0000ff"/><rect x="2" y="9" width="1" height="1" fill="#0000ff"/><rect x="5" y="10" width="1" height="1" fill="#0000ff"/><rect x="7" y="7" width="1" height="1" fill="#0000ff"/><rect x="9" y="5" width="1" height="1" fill="#0000ff"/><rect x="11" y="4" width="1" height="1" fill="#0000ff"/><rect x="11" y="6" width="1" height="1" fill="#0000ff"/><rect x="3" y="10" width="1" height="1" fill="#ff0000"/><rect x="3" y="12" width="1" height="1" fill="#ff0000"/><rect x="2" y="14" width="1" height="1" fill="#ff0000"/><rect x="7" y="9" width="1" height="1" fill="#ff0000"/><rect x="7" y="12" width="1" height="1" fill="#ff0000"/><rect x="9" y="11" width="1" height="1" fill="#ff0000"/><rect x="11" y="9" width="1" height="1" fill="#ff0000"/><rect x="12" y="11" width="1" height="1" fill="#ff0000"/></svg><svg style="position:absolute;left:511px;top:93px" width="16" height="16" viewBox="0 0 16 16" shape-rendering="crispEdges"><rect x="0" y="0" width="16" height="16" fill="#000"/><rect x="1" y="1" width="14" height="14" fill="url(#yl)"/><rect x="1" y="7" width="2" height="8" fill="#00ff00"/><rect x="3" y="10" width="2" height="5" fill="#4040ff"/><rect x="5" y="11" width="1" height="4" fill="#00ff00"/><rect x="6" y="6" width="10" height="10" fill="#000"/><rect x="7" y="7" width="8" height="8" fill="#f4f4f4"/><rect x="7" y="7" width="8" height="1" fill="#0000ff"/><rect x="8" y="9" width="1" height="1" fill="#ff0000"/><rect x="10" y="9" width="1" height="1" fill="#0000ff"/><rect x="12" y="9" width="1" height="1" fill="#ff0000"/><rect x="8" y="11" width="1" height="1" fill="#00c000"/><rect x="10" y="11" width="1" height="1" fill="#ff0000"/><rect x="12" y="11" width="1" height="1" fill="#ff0000"/><rect x="8" y="13" width="1" height="1" fill="#ff0000"/><rect x="10" y="13" width="1" height="1" fill="#ff0000"/><rect x="12" y="13" width="1" height="1" fill="#0000ff"/></svg><svg style="position:absolute;left:33px;top:111px" width="9" height="16" viewBox="0 0 9 16" shape-rendering="crispEdges"><rect x="3" y="0" width="1" height="1" fill="#000"/><rect x="4" y="0" width="1" height="1" fill="#000"/><rect x="5" y="0" width="1" height="1" fill="#000"/><rect x="6" y="0" width="1" height="1" fill="#000"/><rect x="2" y="1" width="1" height="1" fill="#000"/><rect x="3" y="1" width="1" height="1" fill="#e8e800"/><rect x="4" y="1" width="1" height="1" fill="#e8e800"/><rect x="5" y="1" width="1" height="1" fill="#e8e800"/><rect x="6" y="1" width="1" height="1" fill="#e8e800"/><rect x="7" y="1" width="1" height="1" fill="#000"/><rect x="1" y="2" width="1" height="1" fill="#000"/><rect x="2" y="2" width="1" height="1" fill="#e8e800"/><rect x="3" y="2" width="1" height="1" fill="#ffffa0"/><rect x="4" y="2" width="1" height="1" fill="#e8e800"/><rect x="5" y="2" width="1" height="1" fill="#e8e800"/><rect x="6" y="2" width="1" height="1" fill="#e8e800"/><rect x="7" y="2" width="1" height="1" fill="#e8e800"/><rect x="8" y="2" width="1" height="1" fill="#000"/><rect x="1" y="3" width="1" height="1" fill="#000"/><rect x="2" y="3" width="1" height="1" fill="#e8e800"/><rect x="3" y="3" width="1" height="1" fill="#ffffa0"/><rect x="4" y="3" width="1" height="1" fill="#e8e800"/><rect x="5" y="3" width="1" height="1" fill="#e8e800"/><rect x="6" y="3" width="1" height="1" fill="#e8e800"/><rect x="7" y="3" width="1" height="1" fill="#e8e800"/><rect x="8" y="3" width="1" height="1" fill="#000"/><rect x="1" y="4" width="1" height="1" fill="#000"/><rect x="2" y="4" width="1" height="1" fill="#e8e800"/><rect x="3" y="4" width="1" height="1" fill="#ffffa0"/><rect x="4" y="4" width="1" height="1" fill="#e8e800"/><rect x="5" y="4" width="1" height="1" fill="#e8e800"/><rect x="6" y="4" width="1" height="1" fill="#e8e800"/><rect x="7" y="4" width="1" height="1" fill="#a8a800"/><rect x="8" y="4" width="1" height="1" fill="#000"/><rect x="1" y="5" width="1" height="1" fill="#000"/><rect x="2" y="5" width="1" height="1" fill="#e8e800"/><rect x="3" y="5" width="1" height="1" fill="#e8e800"/><rect x="4" y="5" width="1" height="1" fill="#e8e800"/><rect x="5" y="5" width="1" height="1" fill="#e8e800"/><rect x="6" y="5" width="1" height="1" fill="#e8e800"/><rect x="7" y="5" width="1" height="1" fill="#a8a800"/><rect x="8" y="5" width="1" height="1" fill="#000"/><rect x="1" y="6" width="1" height="1" fill="#000"/><rect x="2" y="6" width="1" height="1" fill="#e8e800"/><rect x="3" y="6" width="1" height="1" fill="#e8e800"/><rect x="4" y="6" width="1" height="1" fill="#e8e800"/><rect x="5" y="6" width="1" height="1" fill="#e8e800"/><rect x="6" y="6" width="1" height="1" fill="#e8e800"/><rect x="7" y="6" width="1" height="1" fill="#a8a800"/><rect x="8" y="6" width="1" height="1" fill="#000"/><rect x="2" y="7" width="1" height="1" fill="#000"/><rect x="3" y="7" width="1" height="1" fill="#e8e800"/><rect x="4" y="7" width="1" height="1" fill="#e8e800"/><rect x="5" y="7" width="1" height="1" fill="#e8e800"/><rect x="6" y="7" width="1" height="1" fill="#a8a800"/><rect x="7" y="7" width="1" height="1" fill="#000"/><rect x="2" y="8" width="1" height="1" fill="#000"/><rect x="3" y="8" width="1" height="1" fill="#e8e800"/><rect x="4" y="8" width="1" height="1" fill="#e8e800"/><rect x="5" y="8" width="1" height="1" fill="#e8e800"/><rect x="6" y="8" width="1" height="1" fill="#a8a800"/><rect x="7" y="8" width="1" height="1" fill="#000"/><rect x="2" y="9" width="1" height="1" fill="#000"/><rect x="3" y="9" width="1" height="1" fill="#e8e800"/><rect x="4" y="9" width="1" height="1" fill="#e8e800"/><rect x="5" y="9" width="1" height="1" fill="#e8e800"/><rect x="6" y="9" width="1" height="1" fill="#a8a800"/><rect x="7" y="9" width="1" height="1" fill="#000"/><rect x="3" y="10" width="1" height="1" fill="#000"/><rect x="4" y="10" width="1" height="1" fill="#000"/><rect x="5" y="10" width="1" height="1" fill="#000"/><rect x="6" y="10" width="1" height="1" fill="#000"/><rect x="2" y="12" width="1" height="1" fill="#000"/><rect x="3" y="12" width="1" height="1" fill="#000"/><rect x="4" y="12" width="1" height="1" fill="#000"/><rect x="5" y="12" width="1" height="1" fill="#000"/><rect x="6" y="12" width="1" height="1" fill="#000"/><rect x="2" y="13" width="1" height="1" fill="#000"/><rect x="3" y="13" width="1" height="1" fill="#e8e800"/><rect x="4" y="13" width="1" height="1" fill="#e8e800"/><rect x="5" y="13" width="1" height="1" fill="#e8e800"/><rect x="6" y="13" width="1" height="1" fill="#000"/><rect x="2" y="14" width="1" height="1" fill="#000"/><rect x="3" y="14" width="1" height="1" fill="#e8e800"/><rect x="4" y="14" width="1" height="1" fill="#e8e800"/><rect x="5" y="14" width="1" height="1" fill="#a8a800"/><rect x="6" y="14" width="1" height="1" fill="#000"/><rect x="3" y="15" width="1" height="1" fill="#000"/><rect x="4" y="15" width="1" height="1" fill="#000"/><rect x="5" y="15" width="1" height="1" fill="#000"/></svg><svg style="position:absolute;left:118px;top:112px" width="12" height="18" viewBox="0 0 12 18"><rect x="3.5" y="1.5" width="5" height="4.5" fill="#20c0f0" stroke="#000"/><path d="M1.5 7.5h7v8h1v1.5h-8.5v-1.5h1.5v-6.5h-1z" fill="#1070ff" stroke="#000"/></svg><svg style="position:absolute;left:233px;top:112px" width="18" height="18" viewBox="0 0 18 18"><path d="M6.5 1.5h5v5h5v5h-5v5h-5v-5h-5v-5h5z" fill="#e82020" stroke="#000" stroke-width="1.3"/><rect x="7" y="2" width="2" height="2" fill="#ff7070"/></svg><svg style="position:absolute;left:334px;top:112px" width="19" height="18" viewBox="0 0 19 18"><path d="M9 12l7 5" stroke="#000" stroke-width="4" stroke-linecap="round"/><path d="M9.5 12.5l6 4.2" stroke="#0000e0" stroke-width="2"/><path d="M4 1.5h4l2.5 2.5v4l-2.5 2.5h-4l-2.5-2.5v-4z" fill="#30e040" stroke="#000" stroke-width="1.2"/><rect x="4" y="3" width="1" height="1" fill="#c0ffc0"/><rect x="7" y="7" width="2" height="1" fill="#c0ffc0"/></svg><svg style="position:absolute;left:459px;top:112px" width="17" height="18" viewBox="0 0 17 18"><path d="M1.5 2.5h4l1.5 2h7v11h-12.5z" fill="#f0d000" stroke="#000" stroke-width="1.2"/><rect x="3.5" y="6.5" width="11" height="9" fill="#d8a800" stroke="#000" stroke-width="1.2"/><rect x="4" y="7" width="1" height="8" fill="#ffe860"/><rect x="12" y="7" width="1" height="8" fill="#a0a0a0"/></svg><svg style="position:absolute;left:579px;top:112px" width="16" height="18" viewBox="0 0 16 18"><defs><linearGradient id="tr" x1="0" x2="1"><stop offset="0" stop-color="#606060"/><stop offset="0.3" stop-color="#f0f0f0"/><stop offset="0.6" stop-color="#7a7a7a"/><stop offset="1" stop-color="#303030"/></linearGradient></defs><path d="M1.5 3.5h13v1.5h-1v11.5h-11v-11.5h-1z" fill="url(#tr)" stroke="#000" stroke-width="1.2"/><rect x="6" y="1.5" width="4" height="2" fill="#000"/></svg><svg style="position:absolute;left:0;top:0" width="683" height="509" viewBox="0 0 683 509" shape-rendering="crispEdges"><defs><linearGradient id="cg" x1="0" y1="0" x2="0" y2="1"><stop offset="0" stop-color="#000"/><stop offset="1" stop-color="#3e3e3e"/></linearGradient></defs><rect x="46" y="160" width="389" height="315" fill="#e4e1da"/><rect x="47" y="161" width="387" height="313" fill="#000"/><rect x="49" y="163" width="384" height="309" fill="url(#cg)"/><rect x="46" y="163" width="389" height="1" fill="#6c6c6c"/><rect x="47" y="182" width="387" height="1" fill="#424242"/><rect x="46" y="201" width="389" height="1" fill="#6c6c6c"/><rect x="47" y="220" width="387" height="1" fill="#424242"/><rect x="46" y="240" width="389" height="1" fill="#6c6c6c"/><rect x="47" y="259" width="387" height="1" fill="#424242"/><rect x="46" y="278" width="389" height="1" fill="#6c6c6c"/><rect x="47" y="298" width="387" height="1" fill="#424242"/><rect x="46" y="317" width="389" height="1" fill="#6c6c6c"/><rect x="47" y="336" width="387" height="1" fill="#424242"/><rect x="46" y="356" width="389" height="1" fill="#6c6c6c"/><rect x="47" y="375" width="387" height="1" fill="#424242"/><rect x="46" y="394" width="389" height="1" fill="#6c6c6c"/><rect x="47" y="414" width="387" height="1" fill="#424242"/><rect x="46" y="433" width="389" height="1" fill="#6c6c6c"/><rect x="47" y="452" width="387" height="1" fill="#424242"/><rect x="47" y="472" width="387" height="2" fill="#000"/><rect x="49" y="163" width="1" height="314" fill="#6c6c6c"/><rect x="68" y="163" width="1" height="312" fill="#424242"/><rect x="87" y="163" width="1" height="314" fill="#6c6c6c"/><rect x="106" y="163" width="1" height="312" fill="#424242"/><rect x="125" y="163" width="1" height="314" fill="#6c6c6c"/><rect x="144" y="163" width="1" height="312" fill="#424242"/><rect x="163" y="163" width="1" height="314" fill="#6c6c6c"/><rect x="183" y="163" width="1" height="312" fill="#424242"/><rect x="202" y="163" width="1" height="314" fill="#6c6c6c"/><rect x="221" y="163" width="1" height="312" fill="#424242"/><rect x="240" y="163" width="1" height="314" fill="#6c6c6c"/><rect x="259" y="163" width="1" height="312" fill="#424242"/><rect x="278" y="163" width="1" height="314" fill="#6c6c6c"/><rect x="297" y="163" width="1" height="312" fill="#424242"/><rect x="317" y="163" width="1" height="314" fill="#6c6c6c"/><rect x="336" y="163" width="1" height="312" fill="#424242"/><rect x="355" y="163" width="1" height="314" fill="#6c6c6c"/><rect x="374" y="163" width="1" height="312" fill="#424242"/><rect x="393" y="163" width="1" height="314" fill="#6c6c6c"/><rect x="412" y="163" width="1" height="312" fill="#424242"/><rect x="432" y="163" width="1" height="314" fill="#6c6c6c"/><g fill="#ffff00"><rect x="49" y="401" width="1" height="1"/><rect x="50" y="400" width="1" height="1"/><rect x="50" y="401" width="1" height="1"/><rect x="51" y="400" width="1" height="1"/><rect x="51" y="399" width="1" height="1"/><rect x="52" y="401" width="1" height="1"/><rect x="53" y="399" width="1" height="1"/><rect x="53" y="398" width="1" height="1"/><rect x="54" y="401" width="1" height="1"/><rect x="55" y="399" width="1" height="1"/><rect x="55" y="409" width="1" height="1"/><rect x="56" y="400" width="1" height="1"/><rect x="56" y="395" width="1" height="1"/><rect x="57" y="400" width="1" height="1"/><rect x="57" y="399" width="1" height="1"/><rect x="57" y="397" width="1" height="1"/><rect x="58" y="399" width="1" height="1"/><rect x="59" y="400" width="1" height="1"/><rect x="59" y="407" width="1" height="1"/><rect x="59" y="404" width="1" height="1"/><rect x="60" y="399" width="1" height="1"/><rect x="60" y="398" width="1" height="1"/><rect x="60" y="409" width="1" height="1"/><rect x="61" y="401" width="1" height="1"/><rect x="62" y="401" width="1" height="1"/><rect x="62" y="402" width="1" height="1"/><rect x="62" y="397" width="1" height="1"/><rect x="63" y="408" width="1" height="1"/><rect x="64" y="399" width="1" height="1"/><rect x="64" y="398" width="1" height="1"/><rect x="64" y="408" width="1" height="1"/><rect x="64" y="409" width="1" height="1"/><rect x="65" y="399" width="1" height="1"/><rect x="65" y="398" width="1" height="1"/><rect x="65" y="408" width="1" height="1"/><rect x="66" y="401" width="1" height="1"/><rect x="66" y="409" width="1" height="1"/><rect x="66" y="408" width="1" height="1"/><rect x="67" y="401" width="1" height="1"/><rect x="67" y="400" width="1" height="1"/><rect x="67" y="409" width="1" height="1"/><rect x="67" y="410" width="1" height="1"/><rect x="68" y="401" width="1" height="1"/><rect x="68" y="400" width="1" height="1"/><rect x="68" y="408" width="1" height="1"/><rect x="68" y="409" width="1" height="1"/><rect x="69" y="401" width="1" height="1"/><rect x="70" y="409" width="1" height="1"/><rect x="71" y="400" width="1" height="1"/><rect x="71" y="399" width="1" height="1"/><rect x="71" y="404" width="1" height="1"/><rect x="72" y="399" width="1" height="1"/><rect x="72" y="400" width="1" height="1"/><rect x="72" y="409" width="1" height="1"/><rect x="72" y="396" width="1" height="1"/><rect x="73" y="400" width="1" height="1"/><rect x="74" y="399" width="1" height="1"/><rect x="75" y="399" width="1" height="1"/><rect x="75" y="398" width="1" height="1"/><rect x="76" y="399" width="1" height="1"/><rect x="76" y="400" width="1" height="1"/><rect x="77" y="400" width="1" height="1"/><rect x="78" y="399" width="1" height="1"/><rect x="78" y="407" width="1" height="1"/><rect x="79" y="401" width="1" height="1"/><rect x="79" y="400" width="1" height="1"/><rect x="79" y="395" width="1" height="1"/><rect x="81" y="401" width="1" height="1"/><rect x="82" y="401" width="1" height="1"/><rect x="82" y="400" width="1" height="1"/><rect x="83" y="401" width="1" height="1"/><rect x="84" y="400" width="1" height="1"/><rect x="84" y="399" width="1" height="1"/><rect x="85" y="401" width="1" height="1"/><rect x="85" y="409" width="1" height="1"/><rect x="86" y="400" width="1" height="1"/><rect x="86" y="409" width="1" height="1"/><rect x="87" y="400" width="1" height="1"/><rect x="88" y="400" width="1" height="1"/><rect x="88" y="409" width="1" height="1"/><rect x="89" y="401" width="1" height="1"/><rect x="89" y="409" width="1" height="1"/><rect x="89" y="393" width="1" height="1"/><rect x="90" y="401" width="1" height="1"/><rect x="90" y="402" width="1" height="1"/><rect x="91" y="399" width="1" height="1"/><rect x="91" y="408" width="1" height="1"/><rect x="91" y="409" width="1" height="1"/><rect x="92" y="399" width="1" height="1"/><rect x="92" y="407" width="1" height="1"/><rect x="93" y="399" width="1" height="1"/><rect x="93" y="409" width="1" height="1"/><rect x="94" y="401" width="1" height="1"/><rect x="94" y="408" width="1" height="1"/><rect x="95" y="401" width="1" height="1"/><rect x="96" y="400" width="1" height="1"/><rect x="96" y="401" width="1" height="1"/><rect x="96" y="409" width="1" height="1"/><rect x="96" y="408" width="1" height="1"/><rect x="97" y="401" width="1" height="1"/><rect x="98" y="400" width="1" height="1"/><rect x="98" y="399" width="1" height="1"/><rect x="98" y="409" width="1" height="1"/><rect x="99" y="400" width="1" height="1"/><rect x="99" y="399" width="1" height="1"/><rect x="99" y="407" width="1" height="1"/><rect x="99" y="408" width="1" height="1"/><rect x="100" y="401" width="1" height="1"/><rect x="100" y="407" width="1" height="1"/><rect x="100" y="406" width="1" height="1"/><rect x="101" y="400" width="1" height="1"/><rect x="102" y="401" width="1" height="1"/><rect x="103" y="400" width="1" height="1"/><rect x="103" y="401" width="1" height="1"/><rect x="104" y="401" width="1" height="1"/><rect x="105" y="401" width="1" height="1"/><rect x="105" y="400" width="1" height="1"/><rect x="106" y="400" width="1" height="1"/><rect x="106" y="399" width="1" height="1"/><rect x="107" y="399" width="1" height="1"/><rect x="107" y="409" width="1" height="1"/><rect x="107" y="408" width="1" height="1"/><rect x="108" y="401" width="1" height="1"/><rect x="109" y="400" width="1" height="1"/><rect x="109" y="409" width="1" height="1"/><rect x="110" y="401" width="1" height="1"/><rect x="110" y="400" width="1" height="1"/><rect x="110" y="407" width="1" height="1"/><rect x="111" y="399" width="1" height="1"/><rect x="111" y="398" width="1" height="1"/><rect x="111" y="408" width="1" height="1"/><rect x="112" y="399" width="1" height="1"/><rect x="113" y="400" width="1" height="1"/><rect x="113" y="404" width="1" height="1"/><rect x="114" y="401" width="1" height="1"/><rect x="114" y="400" width="1" height="1"/><rect x="115" y="400" width="1" height="1"/><rect x="116" y="400" width="1" height="1"/><rect x="116" y="408" width="1" height="1"/><rect x="117" y="400" width="1" height="1"/><rect x="117" y="408" width="1" height="1"/><rect x="117" y="407" width="1" height="1"/><rect x="118" y="401" width="1" height="1"/><rect x="119" y="399" width="1" height="1"/><rect x="119" y="400" width="1" height="1"/><rect x="120" y="401" width="1" height="1"/><rect x="120" y="408" width="1" height="1"/><rect x="121" y="401" width="1" height="1"/><rect x="122" y="399" width="1" height="1"/><rect x="122" y="398" width="1" height="1"/><rect x="123" y="399" width="1" height="1"/><rect x="123" y="400" width="1" height="1"/><rect x="123" y="407" width="1" height="1"/><rect x="124" y="401" width="1" height="1"/><rect x="124" y="402" width="1" height="1"/><rect x="124" y="407" width="1" height="1"/><rect x="125" y="400" width="1" height="1"/><rect x="125" y="399" width="1" height="1"/><rect x="125" y="393" width="1" height="1"/><rect x="126" y="399" width="1" height="1"/><rect x="127" y="401" width="1" height="1"/><rect x="127" y="409" width="1" height="1"/><rect x="128" y="399" width="1" height="1"/><rect x="129" y="400" width="1" height="1"/><rect x="130" y="401" width="1" height="1"/><rect x="130" y="400" width="1" height="1"/><rect x="130" y="408" width="1" height="1"/><rect x="130" y="398" width="1" height="1"/><rect x="131" y="397" width="1" height="1"/><rect x="132" y="400" width="1" height="1"/><rect x="132" y="401" width="1" height="1"/><rect x="133" y="401" width="1" height="1"/><rect x="134" y="409" width="1" height="1"/><rect x="134" y="408" width="1" height="1"/><rect x="135" y="399" width="1" height="1"/><rect x="135" y="397" width="1" height="1"/><rect x="136" y="400" width="1" height="1"/><rect x="137" y="399" width="1" height="1"/><rect x="137" y="393" width="1" height="1"/><rect x="138" y="400" width="1" height="1"/><rect x="138" y="399" width="1" height="1"/><rect x="139" y="401" width="1" height="1"/><rect x="139" y="409" width="1" height="1"/><rect x="140" y="401" width="1" height="1"/><rect x="141" y="400" width="1" height="1"/><rect x="141" y="399" width="1" height="1"/><rect x="142" y="401" width="1" height="1"/><rect x="142" y="402" width="1" height="1"/><rect x="142" y="398" width="1" height="1"/><rect x="143" y="400" width="1" height="1"/><rect x="143" y="401" width="1" height="1"/><rect x="143" y="408" width="1" height="1"/><rect x="143" y="407" width="1" height="1"/><rect x="144" y="401" width="1" height="1"/><rect x="144" y="400" width="1" height="1"/><rect x="144" y="404" width="1" height="1"/><rect x="145" y="400" width="1" height="1"/><rect x="145" y="408" width="1" height="1"/><rect x="145" y="409" width="1" height="1"/><rect x="146" y="401" width="1" height="1"/><rect x="146" y="402" width="1" height="1"/><rect x="146" y="409" width="1" height="1"/><rect x="147" y="400" width="1" height="1"/><rect x="147" y="399" width="1" height="1"/><rect x="148" y="400" width="1" height="1"/><rect x="148" y="399" width="1" height="1"/><rect x="149" y="400" width="1" height="1"/><rect x="150" y="399" width="1" height="1"/><rect x="150" y="400" width="1" height="1"/><rect x="150" y="409" width="1" height="1"/><rect x="150" y="408" width="1" height="1"/><rect x="151" y="399" width="1" height="1"/><rect x="151" y="408" width="1" height="1"/><rect x="152" y="400" width="1" height="1"/><rect x="152" y="401" width="1" height="1"/><rect x="153" y="399" width="1" height="1"/><rect x="153" y="398" width="1" height="1"/><rect x="153" y="408" width="1" height="1"/><rect x="154" y="401" width="1" height="1"/><rect x="154" y="400" width="1" height="1"/><rect x="154" y="408" width="1" height="1"/><rect x="155" y="401" width="1" height="1"/><rect x="155" y="402" width="1" height="1"/><rect x="156" y="399" width="1" height="1"/><rect x="156" y="398" width="1" height="1"/><rect x="157" y="401" width="1" height="1"/><rect x="158" y="400" width="1" height="1"/><rect x="158" y="407" width="1" height="1"/><rect x="159" y="400" width="1" height="1"/><rect x="159" y="401" width="1" height="1"/><rect x="160" y="401" width="1" height="1"/><rect x="160" y="402" width="1" height="1"/><rect x="160" y="404" width="1" height="1"/><rect x="161" y="400" width="1" height="1"/><rect x="161" y="409" width="1" height="1"/><rect x="162" y="400" width="1" height="1"/><rect x="162" y="401" width="1" height="1"/><rect x="163" y="401" width="1" height="1"/><rect x="163" y="400" width="1" height="1"/><rect x="164" y="401" width="1" height="1"/><rect x="164" y="402" width="1" height="1"/><rect x="164" y="395" width="1" height="1"/><rect x="165" y="399" width="1" height="1"/><rect x="165" y="408" width="1" height="1"/><rect x="165" y="409" width="1" height="1"/><rect x="166" y="401" width="1" height="1"/><rect x="166" y="402" width="1" height="1"/><rect x="166" y="408" width="1" height="1"/><rect x="167" y="401" width="1" height="1"/><rect x="168" y="401" width="1" height="1"/><rect x="169" y="401" width="1" height="1"/><rect x="170" y="401" width="1" height="1"/><rect x="170" y="400" width="1" height="1"/><rect x="171" y="400" width="1" height="1"/><rect x="171" y="399" width="1" height="1"/><rect x="172" y="400" width="1" height="1"/><rect x="172" y="401" width="1" height="1"/><rect x="172" y="407" width="1" height="1"/><rect x="173" y="400" width="1" height="1"/><rect x="173" y="407" width="1" height="1"/><rect x="173" y="405" width="1" height="1"/><rect x="174" y="399" width="1" height="1"/><rect x="174" y="398" width="1" height="1"/><rect x="174" y="408" width="1" height="1"/><rect x="175" y="401" width="1" height="1"/><rect x="175" y="400" width="1" height="1"/><rect x="176" y="400" width="1" height="1"/><rect x="177" y="401" width="1" height="1"/><rect x="178" y="399" width="1" height="1"/><rect x="178" y="407" width="1" height="1"/><rect x="178" y="406" width="1" height="1"/><rect x="179" y="401" width="1" height="1"/><rect x="180" y="400" width="1" height="1"/><rect x="181" y="400" width="1" height="1"/><rect x="182" y="400" width="1" height="1"/><rect x="182" y="399" width="1" height="1"/><rect x="183" y="401" width="1" height="1"/><rect x="183" y="400" width="1" height="1"/><rect x="183" y="408" width="1" height="1"/><rect x="183" y="397" width="1" height="1"/><rect x="184" y="401" width="1" height="1"/><rect x="184" y="402" width="1" height="1"/><rect x="184" y="406" width="1" height="1"/><rect x="185" y="400" width="1" height="1"/><rect x="185" y="399" width="1" height="1"/><rect x="185" y="407" width="1" height="1"/><rect x="186" y="401" width="1" height="1"/><rect x="186" y="408" width="1" height="1"/><rect x="187" y="401" width="1" height="1"/><rect x="187" y="407" width="1" height="1"/><rect x="187" y="404" width="1" height="1"/><rect x="188" y="399" width="1" height="1"/><rect x="188" y="409" width="1" height="1"/><rect x="189" y="399" width="1" height="1"/><rect x="189" y="408" width="1" height="1"/><rect x="190" y="401" width="1" height="1"/><rect x="191" y="399" width="1" height="1"/><rect x="191" y="398" width="1" height="1"/><rect x="191" y="407" width="1" height="1"/><rect x="192" y="400" width="1" height="1"/><rect x="192" y="401" width="1" height="1"/><rect x="192" y="408" width="1" height="1"/><rect x="193" y="400" width="1" height="1"/><rect x="193" y="401" width="1" height="1"/><rect x="193" y="409" width="1" height="1"/><rect x="193" y="397" width="1" height="1"/><rect x="194" y="399" width="1" height="1"/><rect x="194" y="398" width="1" height="1"/><rect x="194" y="409" width="1" height="1"/><rect x="195" y="400" width="1" height="1"/><rect x="195" y="408" width="1" height="1"/><rect x="196" y="401" width="1" height="1"/><rect x="197" y="401" width="1" height="1"/><rect x="197" y="408" width="1" height="1"/><rect x="198" y="401" width="1" height="1"/><rect x="198" y="402" width="1" height="1"/><rect x="199" y="400" width="1" height="1"/><rect x="199" y="401" width="1" height="1"/><rect x="200" y="400" width="1" height="1"/><rect x="200" y="409" width="1" height="1"/><rect x="201" y="401" width="1" height="1"/><rect x="202" y="400" width="1" height="1"/><rect x="202" y="408" width="1" height="1"/><rect x="203" y="401" width="1" height="1"/><rect x="204" y="401" width="1" height="1"/><rect x="205" y="400" width="1" height="1"/><rect x="205" y="407" width="1" height="1"/><rect x="206" y="401" width="1" height="1"/><rect x="206" y="400" width="1" height="1"/><rect x="206" y="409" width="1" height="1"/><rect x="207" y="400" width="1" height="1"/><rect x="207" y="401" width="1" height="1"/><rect x="208" y="400" width="1" height="1"/><rect x="208" y="401" width="1" height="1"/><rect x="208" y="409" width="1" height="1"/><rect x="209" y="401" width="1" height="1"/><rect x="209" y="400" width="1" height="1"/><rect x="210" y="399" width="1" height="1"/><rect x="211" y="399" width="1" height="1"/><rect x="211" y="409" width="1" height="1"/><rect x="212" y="400" width="1" height="1"/><rect x="213" y="401" width="1" height="1"/><rect x="213" y="407" width="1" height="1"/><rect x="214" y="401" width="1" height="1"/><rect x="214" y="400" width="1" height="1"/><rect x="214" y="407" width="1" height="1"/><rect x="215" y="401" width="1" height="1"/><rect x="216" y="399" width="1" height="1"/><rect x="216" y="400" width="1" height="1"/><rect x="216" y="409" width="1" height="1"/><rect x="217" y="400" width="1" height="1"/><rect x="218" y="400" width="1" height="1"/><rect x="218" y="408" width="1" height="1"/><rect x="218" y="409" width="1" height="1"/><rect x="219" y="399" width="1" height="1"/><rect x="219" y="409" width="1" height="1"/><rect x="220" y="400" width="1" height="1"/><rect x="220" y="399" width="1" height="1"/><rect x="220" y="409" width="1" height="1"/><rect x="221" y="401" width="1" height="1"/><rect x="221" y="402" width="1" height="1"/><rect x="221" y="408" width="1" height="1"/><rect x="222" y="401" width="1" height="1"/><rect x="222" y="407" width="1" height="1"/><rect x="222" y="408" width="1" height="1"/><rect x="223" y="401" width="1" height="1"/><rect x="223" y="400" width="1" height="1"/><rect x="223" y="407" width="1" height="1"/><rect x="224" y="400" width="1" height="1"/><rect x="225" y="401" width="1" height="1"/><rect x="225" y="400" width="1" height="1"/><rect x="225" y="408" width="1" height="1"/><rect x="225" y="407" width="1" height="1"/><rect x="226" y="401" width="1" height="1"/><rect x="227" y="399" width="1" height="1"/><rect x="227" y="408" width="1" height="1"/><rect x="228" y="400" width="1" height="1"/><rect x="228" y="407" width="1" height="1"/><rect x="229" y="399" width="1" height="1"/><rect x="229" y="400" width="1" height="1"/><rect x="230" y="400" width="1" height="1"/><rect x="230" y="399" width="1" height="1"/><rect x="230" y="408" width="1" height="1"/><rect x="230" y="396" width="1" height="1"/><rect x="231" y="409" width="1" height="1"/><rect x="232" y="401" width="1" height="1"/><rect x="232" y="400" width="1" height="1"/><rect x="233" y="401" width="1" height="1"/><rect x="234" y="401" width="1" height="1"/><rect x="235" y="399" width="1" height="1"/><rect x="235" y="409" width="1" height="1"/><rect x="236" y="400" width="1" height="1"/><rect x="236" y="399" width="1" height="1"/><rect x="237" y="400" width="1" height="1"/><rect x="238" y="408" width="1" height="1"/><rect x="239" y="401" width="1" height="1"/><rect x="239" y="402" width="1" height="1"/><rect x="239" y="395" width="1" height="1"/><rect x="241" y="400" width="1" height="1"/><rect x="241" y="409" width="1" height="1"/><rect x="241" y="410" width="1" height="1"/><rect x="242" y="400" width="1" height="1"/><rect x="243" y="401" width="1" height="1"/><rect x="243" y="400" width="1" height="1"/><rect x="244" y="401" width="1" height="1"/><rect x="244" y="402" width="1" height="1"/><rect x="245" y="399" width="1" height="1"/><rect x="245" y="398" width="1" height="1"/><rect x="245" y="409" width="1" height="1"/><rect x="246" y="401" width="1" height="1"/><rect x="246" y="409" width="1" height="1"/><rect x="248" y="401" width="1" height="1"/><rect x="248" y="402" width="1" height="1"/><rect x="248" y="408" width="1" height="1"/><rect x="248" y="397" width="1" height="1"/><rect x="249" y="400" width="1" height="1"/><rect x="250" y="401" width="1" height="1"/><rect x="250" y="408" width="1" height="1"/><rect x="253" y="399" width="1" height="1"/><rect x="253" y="400" width="1" height="1"/><rect x="253" y="409" width="1" height="1"/><rect x="254" y="401" width="1" height="1"/><rect x="254" y="409" width="1" height="1"/><rect x="255" y="401" width="1" height="1"/><rect x="255" y="402" width="1" height="1"/><rect x="255" y="397" width="1" height="1"/><rect x="256" y="400" width="1" height="1"/><rect x="257" y="401" width="1" height="1"/><rect x="258" y="400" width="1" height="1"/><rect x="259" y="399" width="1" height="1"/><rect x="259" y="400" width="1" height="1"/><rect x="262" y="401" width="1" height="1"/><rect x="262" y="400" width="1" height="1"/><rect x="263" y="401" width="1" height="1"/><rect x="263" y="400" width="1" height="1"/><rect x="264" y="401" width="1" height="1"/><rect x="264" y="408" width="1" height="1"/><rect x="265" y="400" width="1" height="1"/><rect x="265" y="401" width="1" height="1"/><rect x="265" y="408" width="1" height="1"/><rect x="266" y="399" width="1" height="1"/><rect x="266" y="397" width="1" height="1"/><rect x="267" y="399" width="1" height="1"/><rect x="267" y="408" width="1" height="1"/><rect x="268" y="408" width="1" height="1"/><rect x="268" y="409" width="1" height="1"/><rect x="269" y="401" width="1" height="1"/><rect x="269" y="402" width="1" height="1"/><rect x="269" y="408" width="1" height="1"/><rect x="269" y="409" width="1" height="1"/><rect x="270" y="400" width="1" height="1"/><rect x="270" y="407" width="1" height="1"/><rect x="271" y="401" width="1" height="1"/><rect x="272" y="399" width="1" height="1"/><rect x="272" y="407" width="1" height="1"/><rect x="273" y="401" width="1" height="1"/><rect x="273" y="402" width="1" height="1"/><rect x="273" y="393" width="1" height="1"/><rect x="274" y="400" width="1" height="1"/><rect x="274" y="408" width="1" height="1"/><rect x="275" y="400" width="1" height="1"/><rect x="275" y="399" width="1" height="1"/><rect x="276" y="401" width="1" height="1"/><rect x="276" y="407" width="1" height="1"/><rect x="277" y="401" width="1" height="1"/><rect x="277" y="400" width="1" height="1"/><rect x="278" y="401" width="1" height="1"/><rect x="278" y="408" width="1" height="1"/><rect x="279" y="401" width="1" height="1"/><rect x="279" y="402" width="1" height="1"/><rect x="279" y="409" width="1" height="1"/><rect x="280" y="401" width="1" height="1"/><rect x="281" y="400" width="1" height="1"/><rect x="281" y="399" width="1" height="1"/><rect x="281" y="408" width="1" height="1"/><rect x="283" y="401" width="1" height="1"/><rect x="283" y="409" width="1" height="1"/><rect x="284" y="400" width="1" height="1"/><rect x="287" y="401" width="1" height="1"/><rect x="287" y="404" width="1" height="1"/><rect x="288" y="408" width="1" height="1"/><rect x="289" y="400" width="1" height="1"/><rect x="289" y="408" width="1" height="1"/><rect x="289" y="407" width="1" height="1"/><rect x="292" y="409" width="1" height="1"/><rect x="295" y="400" width="1" height="1"/><rect x="295" y="401" width="1" height="1"/><rect x="296" y="400" width="1" height="1"/><rect x="296" y="407" width="1" height="1"/><rect x="296" y="408" width="1" height="1"/><rect x="297" y="408" width="1" height="1"/><rect x="298" y="407" width="1" height="1"/><rect x="301" y="400" width="1" height="1"/><rect x="302" y="399" width="1" height="1"/><rect x="303" y="400" width="1" height="1"/><rect x="303" y="399" width="1" height="1"/><rect x="304" y="401" width="1" height="1"/><rect x="304" y="400" width="1" height="1"/><rect x="304" y="408" width="1" height="1"/><rect x="305" y="399" width="1" height="1"/><rect x="305" y="400" width="1" height="1"/><rect x="305" y="398" width="1" height="1"/><rect x="306" y="400" width="1" height="1"/><rect x="306" y="398" width="1" height="1"/><rect x="307" y="406" width="1" height="1"/><rect x="309" y="400" width="1" height="1"/><rect x="311" y="400" width="1" height="1"/><rect x="312" y="401" width="1" height="1"/><rect x="312" y="402" width="1" height="1"/><rect x="312" y="408" width="1" height="1"/><rect x="312" y="409" width="1" height="1"/><rect x="312" y="406" width="1" height="1"/><rect x="313" y="400" width="1" height="1"/><rect x="315" y="409" width="1" height="1"/><rect x="316" y="401" width="1" height="1"/><rect x="316" y="400" width="1" height="1"/><rect x="317" y="400" width="1" height="1"/><rect x="318" y="400" width="1" height="1"/><rect x="318" y="401" width="1" height="1"/><rect x="319" y="400" width="1" height="1"/><rect x="319" y="399" width="1" height="1"/><rect x="320" y="399" width="1" height="1"/><rect x="320" y="400" width="1" height="1"/><rect x="321" y="401" width="1" height="1"/><rect x="321" y="400" width="1" height="1"/><rect x="322" y="408" width="1" height="1"/><rect x="323" y="400" width="1" height="1"/><rect x="323" y="399" width="1" height="1"/><rect x="324" y="404" width="1" height="1"/><rect x="326" y="399" width="1" height="1"/><rect x="326" y="400" width="1" height="1"/><rect x="326" y="398" width="1" height="1"/><rect x="328" y="401" width="1" height="1"/><rect x="328" y="409" width="1" height="1"/><rect x="330" y="399" width="1" height="1"/><rect x="330" y="409" width="1" height="1"/><rect x="332" y="400" width="1" height="1"/><rect x="334" y="401" width="1" height="1"/><rect x="334" y="400" width="1" height="1"/><rect x="336" y="400" width="1" height="1"/><rect x="336" y="399" width="1" height="1"/><rect x="338" y="408" width="1" height="1"/><rect x="339" y="401" width="1" height="1"/><rect x="341" y="399" width="1" height="1"/><rect x="341" y="408" width="1" height="1"/><rect x="341" y="409" width="1" height="1"/><rect x="341" y="398" width="1" height="1"/><rect x="342" y="408" width="1" height="1"/><rect x="342" y="407" width="1" height="1"/><rect x="343" y="401" width="1" height="1"/><rect x="350" y="400" width="1" height="1"/><rect x="350" y="401" width="1" height="1"/><rect x="351" y="399" width="1" height="1"/><rect x="356" y="401" width="1" height="1"/><rect x="356" y="400" width="1" height="1"/><rect x="363" y="400" width="1" height="1"/><rect x="363" y="401" width="1" height="1"/><rect x="365" y="400" width="1" height="1"/><rect x="365" y="401" width="1" height="1"/><rect x="365" y="407" width="1" height="1"/><rect x="367" y="400" width="1" height="1"/><rect x="373" y="401" width="1" height="1"/><rect x="373" y="402" width="1" height="1"/><rect x="374" y="399" width="1" height="1"/><rect x="374" y="400" width="1" height="1"/><rect x="376" y="400" width="1" height="1"/><rect x="377" y="400" width="1" height="1"/><rect x="377" y="399" width="1" height="1"/><rect x="379" y="399" width="1" height="1"/><rect x="380" y="401" width="1" height="1"/><rect x="380" y="400" width="1" height="1"/><rect x="381" y="399" width="1" height="1"/><rect x="385" y="400" width="1" height="1"/><rect x="395" y="401" width="1" height="1"/><rect x="395" y="402" width="1" height="1"/><rect x="398" y="398" width="1" height="1"/><rect x="400" y="409" width="1" height="1"/><rect x="403" y="396" width="1" height="1"/><rect x="405" y="399" width="1" height="1"/><rect x="405" y="400" width="1" height="1"/><rect x="408" y="396" width="1" height="1"/><rect x="410" y="401" width="1" height="1"/><rect x="410" y="400" width="1" height="1"/><rect x="411" y="408" width="1" height="1"/><rect x="411" y="405" width="1" height="1"/><rect x="417" y="400" width="1" height="1"/><rect x="418" y="400" width="1" height="1"/><rect x="420" y="399" width="1" height="1"/><rect x="420" y="400" width="1" height="1"/><rect x="420" y="404" width="1" height="1"/><rect x="425" y="400" width="1" height="1"/><rect x="430" y="407" width="1" height="1"/><rect x="432" y="400" width="1" height="1"/><rect x="222" y="346" width="1" height="1"/><rect x="270" y="371" width="1" height="1"/></g><polyline points="49.4,221.0 50.4,217.6 52.4,222.3 54.6,215.6 55.6,218.4 56.6,220.3 58.3,205.3 59.8,213.2 60.5,217.4 62.2,212.5 63.2,216.1 65.2,224.0 66.1,226.2 68.1,218.4 70.4,209.5 71.7,218.4 75.5,228.4 77.2,219.8 79.4,227.4 81.6,214.5 83.3,216.6 85.3,228.4 88.2,227.4 91.2,226.4 93.4,230.6 95.4,227.7 97.4,228.7 99.3,228.7 99.8,208.5 100.3,187.1 101.0,196.3 101.6,196.8 102.0,211.5 102.6,212.5 103.0,221.3 104.5,225.2 105.9,221.3 107.7,225.7 109.2,223.3 110.6,223.3 112.6,228.2 114.1,227.2 116.0,226.2 118.5,228.7 120.5,226.2 122.4,229.2 124.4,226.7 125.9,228.2 127.5,226.2 129.3,230.6 130.5,224.3 131.7,222.8 133.7,222.3 135.7,220.3 138.1,221.3 139.5,221.0 140.5,219.6 141.7,218.4 142.4,222.0 143.4,228.4 145.9,226.4 147.8,226.9 149.8,228.4 151.3,227.2 152.7,228.4 157.6,228.4 158.6,229.4 160.1,224.5 162.1,226.4 164.5,224.3 166.0,227.9 167.5,220.5 168.9,217.4 170.4,218.6 171.9,224.5 173.2,212.7 174.5,207.3 175.3,212.2 176.3,221.0 177.3,225.0 181.2,227.4 183.7,225.0 186.1,226.4 187.2,229.9 188.2,218.6 189.7,214.5 190.9,215.1 192.4,218.1 195.3,221.5 198.3,218.6 200.7,216.4 202.7,220.7 204.2,218.4 206.1,217.4 208.6,220.7 211.5,216.4 214.5,220.7 217.4,218.4 218.4,221.5 220.4,217.6 223.8,217.8 225.3,221.5 226.3,226.4 229.7,221.5 231.7,218.4 233.6,219.4 235.2,224.0 237.4,219.4 238.9,218.6 241.1,224.5 243.3,218.4 245.8,220.0 247.8,219.4 250.7,219.4 253.2,224.3 256.6,218.4 259.5,220.7 262.5,220.7 265.4,219.1 267.9,219.1 270.3,217.4 272.3,224.5 276.2,218.4 278.7,222.3 281.2,219.1 283.5,220.7 285.9,215.6 287.9,212.2 289.4,210.2 290.4,214.6 291.5,223.5 292.8,219.4 295.8,218.8 297.9,218.1 299.7,217.1 301.2,225.9 302.6,217.8 304.1,223.5 306.6,226.6 309.5,221.5 312.5,217.4 314.4,219.6 316.6,225.6 318.8,221.5 322.3,218.4 325.2,221.3 328.2,224.3 330.1,219.6 331.5,220.0 333.4,223.5 335.4,219.4 337.9,220.0 340.8,222.3 343.3,220.0 345.5,218.4 347.2,224.5 348.7,225.6 351.1,223.5 353.1,223.0 354.6,219.4 355.7,217.4 358.0,219.6 360.5,228.2 362.4,223.0 364.4,217.4 365.4,222.0 367.1,218.6 368.5,217.8 370.8,219.1 374.7,222.3 377.2,219.1 380.5,216.1 382.9,221.0 386.8,221.3 389.3,223.5 391.3,218.4 393.2,222.0 395.5,216.1 397.2,222.0 399.4,224.5 401.6,217.4 403.5,208.0 405.0,211.7 406.5,218.1 408.5,219.1 410.4,220.3 413.4,220.3 416.3,223.5 420.2,217.6 422.2,221.0 424.7,217.4 426.1,221.0 429.1,221.3 431.8,220.3" fill="none" stroke="#ff8000" stroke-width="1" shape-rendering="crispEdges"/></svg><div class="t" style="left:49px;top:150px;font-size:11px;color:#000;font-weight:400;">MB/s</div><div class="t" style="left:418px;top:150px;font-size:11px;color:#000;font-weight:400;">ms</div><div class="t" style="left:0px;top:157px;width:44px;text-align:right;font-size:11px;color:#000;font-weight:400;">400</div><div class="t" style="left:0px;top:195px;width:44px;text-align:right;font-size:11px;color:#000;font-weight:400;">350</div><div class="t" style="left:0px;top:234px;width:44px;text-align:right;font-size:11px;color:#000;font-weight:400;">300</div><div class="t" style="left:0px;top:272px;width:44px;text-align:right;font-size:11px;color:#000;font-weight:400;">250</div><div class="t" style="left:0px;top:311px;width:44px;text-align:right;font-size:11px;color:#000;font-weight:400;">200</div><div class="t" style="left:0px;top:350px;width:44px;text-align:right;font-size:11px;color:#000;font-weight:400;">150</div><div class="t" style="left:0px;top:388px;width:44px;text-align:right;font-size:11px;color:#000;font-weight:400;">100</div><div class="t" style="left:0px;top:427px;width:44px;text-align:right;font-size:11px;color:#000;font-weight:400;">50</div><div class="t" style="left:437px;top:157px;font-size:11px;color:#000;font-weight:400;">4.00</div><div class="t" style="left:437px;top:195px;font-size:11px;color:#000;font-weight:400;">3.50</div><div class="t" style="left:437px;top:234px;font-size:11px;color:#000;font-weight:400;">3.00</div><div class="t" style="left:437px;top:272px;font-size:11px;color:#000;font-weight:400;">2.50</div><div class="t" style="left:437px;top:311px;font-size:11px;color:#000;font-weight:400;">2.00</div><div class="t" style="left:437px;top:350px;font-size:11px;color:#000;font-weight:400;">1.50</div><div class="t" style="left:437px;top:388px;font-size:11px;color:#000;font-weight:400;">1.00</div><div class="t" style="left:437px;top:427px;font-size:11px;color:#000;font-weight:400;">0.50</div><div class="t" style="left:19px;top:477px;width:60px;text-align:center;font-size:11px;color:#000;font-weight:400;">0</div><div class="t" style="left:57px;top:477px;width:60px;text-align:center;font-size:11px;color:#000;font-weight:400;">100</div><div class="t" style="left:95px;top:477px;width:60px;text-align:center;font-size:11px;color:#000;font-weight:400;">200</div><div class="t" style="left:133px;top:477px;width:60px;text-align:center;font-size:11px;color:#000;font-weight:400;">300</div><div class="t" style="left:172px;top:477px;width:60px;text-align:center;font-size:11px;color:#000;font-weight:400;">400</div><div class="t" style="left:210px;top:477px;width:60px;text-align:center;font-size:11px;color:#000;font-weight:400;">500</div><div class="t" style="left:248px;top:477px;width:60px;text-align:center;font-size:11px;color:#000;font-weight:400;">600</div><div class="t" style="left:287px;top:477px;width:60px;text-align:center;font-size:11px;color:#000;font-weight:400;">700</div><div class="t" style="left:325px;top:477px;width:60px;text-align:center;font-size:11px;color:#000;font-weight:400;">800</div><div class="t" style="left:363px;top:477px;width:60px;text-align:center;font-size:11px;color:#000;font-weight:400;">900</div><div class="t" style="left:414px;top:477px;font-size:11px;color:#000;font-weight:400;">1000gB</div><div style="left:474px;top:143px;width:180px;height:23px;background:#404040;"></div><div style="left:474px;top:143px;width:179px;height:22px;background:#ffffff;"></div><div style="left:475px;top:144px;width:178px;height:21px;background:#808080;"></div><div style="left:475px;top:144px;width:177px;height:20px;background:#d4d0c8;"></div><div class="t" style="left:552px;top:148px;font-size:12px;transform:scaleX(0.917);transform-origin:0 0;color:#000;font-weight:400;">Start</div><div style="left:466px;top:175px;width:192px;height:1px;background:#808080;"></div><div style="left:466px;top:176px;width:193px;height:1px;background:#ffffff;"></div><div style="left:658px;top:175px;width:1px;height:1px;background:#ffffff;"></div><div style="left:466px;top:214px;width:192px;height:1px;background:#808080;"></div><div style="left:466px;top:215px;width:193px;height:1px;background:#ffffff;"></div><div style="left:658px;top:214px;width:1px;height:1px;background:#ffffff;"></div><div style="left:466px;top:286px;width:192px;height:1px;background:#808080;"></div><div style="left:466px;top:287px;width:193px;height:1px;background:#ffffff;"></div><div style="left:658px;top:286px;width:1px;height:1px;background:#ffffff;"></div><div style="left:466px;top:390px;width:192px;height:1px;background:#808080;"></div><div style="left:466px;top:391px;width:193px;height:1px;background:#ffffff;"></div><div style="left:658px;top:390px;width:1px;height:1px;background:#ffffff;"></div><svg style="position:absolute;left:472px;top:181px" width="12" height="12" viewBox="0 0 12 12" shape-rendering="crispEdges"><rect x="4" y="2" width="1" height="1" fill="#e4e2de"/><rect x="5" y="2" width="1" height="1" fill="#e4e2de"/><rect x="6" y="2" width="1" height="1" fill="#e4e2de"/><rect x="7" y="2" width="1" height="1" fill="#e4e2de"/><rect x="3" y="3" width="1" height="1" fill="#e4e2de"/><rect x="4" y="3" width="1" height="1" fill="#e4e2de"/><rect x="5" y="3" width="1" height="1" fill="#e4e2de"/><rect x="6" y="3" width="1" height="1" fill="#e4e2de"/><rect x="7" y="3" width="1" height="1" fill="#e4e2de"/><rect x="8" y="3" width="1" height="1" fill="#e4e2de"/><rect x="2" y="4" width="1" height="1" fill="#e4e2de"/><rect x="3" y="4" width="1" height="1" fill="#e4e2de"/><rect x="4" y="4" width="1" height="1" fill="#e4e2de"/><rect x="5" y="4" width="1" height="1" fill="#e4e2de"/><rect x="6" y="4" width="1" height="1" fill="#e4e2de"/><rect x="7" y="4" width="1" height="1" fill="#e4e2de"/><rect x="8" y="4" width="1" height="1" fill="#e4e2de"/><rect x="9" y="4" width="1" height="1" fill="#e4e2de"/><rect x="2" y="5" width="1" height="1" fill="#e4e2de"/><rect x="3" y="5" width="1" height="1" fill="#e4e2de"/><rect x="4" y="5" width="1" height="1" fill="#e4e2de"/><rect x="5" y="5" width="1" height="1" fill="#e4e2de"/><rect x="6" y="5" width="1" height="1" fill="#e4e2de"/><rect x="7" y="5" width="1" height="1" fill="#e4e2de"/><rect x="8" y="5" width="1" height="1" fill="#e4e2de"/><rect x="9" y="5" width="1" height="1" fill="#e4e2de"/><rect x="2" y="6" width="1" height="1" fill="#e4e2de"/><rect x="3" y="6" width="1" height="1" fill="#e4e2de"/><rect x="4" y="6" width="1" height="1" fill="#e4e2de"/><rect x="5" y="6" width="1" height="1" fill="#e4e2de"/><rect x="6" y="6" width="1" height="1" fill="#e4e2de"/><rect x="7" y="6" width="1" height="1" fill="#e4e2de"/><rect x="8" y="6" width="1" height="1" fill="#e4e2de"/><rect x="9" y="6" width="1" height="1" fill="#e4e2de"/><rect x="2" y="7" width="1" height="1" fill="#e4e2de"/><rect x="3" y="7" width="1" height="1" fill="#e4e2de"/><rect x="4" y="7" width="1" height="1" fill="#e4e2de"/><rect x="5" y="7" width="1" height="1" fill="#e4e2de"/><rect x="6" y="7" width="1" height="1" fill="#e4e2de"/><rect x="7" y="7" width="1" height="1" fill="#e4e2de"/><rect x="8" y="7" width="1" height="1" fill="#e4e2de"/><rect x="9" y="7" width="1" height="1" fill="#e4e2de"/><rect x="3" y="8" width="1" height="1" fill="#e4e2de"/><rect x="4" y="8" width="1" height="1" fill="#e4e2de"/><rect x="5" y="8" width="1" height="1" fill="#e4e2de"/><rect x="6" y="8" width="1" height="1" fill="#e4e2de"/><rect x="7" y="8" width="1" height="1" fill="#e4e2de"/><rect x="8" y="8" width="1" height="1" fill="#e4e2de"/><rect x="4" y="9" width="1" height="1" fill="#e4e2de"/><rect x="5" y="9" width="1" height="1" fill="#e4e2de"/><rect x="6" y="9" width="1" height="1" fill="#e4e2de"/><rect x="7" y="9" width="1" height="1" fill="#e4e2de"/><rect x="4" y="0" width="1" height="1" fill="#808080"/><rect x="5" y="0" width="1" height="1" fill="#808080"/><rect x="6" y="0" width="1" height="1" fill="#808080"/><rect x="7" y="0" width="1" height="1" fill="#808080"/><rect x="2" y="1" width="1" height="1" fill="#808080"/><rect x="3" y="1" width="1" height="1" fill="#808080"/><rect x="8" y="1" width="1" height="1" fill="#808080"/><rect x="9" y="1" width="1" height="1" fill="#808080"/><rect x="1" y="2" width="1" height="1" fill="#808080"/><rect x="10" y="2" width="1" height="1" fill="#ffffff"/><rect x="1" y="3" width="1" height="1" fill="#808080"/><rect x="10" y="3" width="1" height="1" fill="#ffffff"/><rect x="0" y="4" width="1" height="1" fill="#808080"/><rect x="11" y="4" width="1" height="1" fill="#ffffff"/><rect x="0" y="5" width="1" height="1" fill="#808080"/><rect x="11" y="5" width="1" height="1" fill="#ffffff"/><rect x="0" y="6" width="1" height="1" fill="#808080"/><rect x="11" y="6" width="1" height="1" fill="#ffffff"/><rect x="0" y="7" width="1" height="1" fill="#808080"/><rect x="11" y="7" width="1" height="1" fill="#ffffff"/><rect x="1" y="8" width="1" height="1" fill="#808080"/><rect x="10" y="8" width="1" height="1" fill="#ffffff"/><rect x="1" y="9" width="1" height="1" fill="#808080"/><rect x="10" y="9" width="1" height="1" fill="#ffffff"/><rect x="2" y="10" width="1" height="1" fill="#ffffff"/><rect x="3" y="10" width="1" height="1" fill="#ffffff"/><rect x="8" y="10" width="1" height="1" fill="#ffffff"/><rect x="9" y="10" width="1" height="1" fill="#ffffff"/><rect x="4" y="11" width="1" height="1" fill="#ffffff"/><rect x="5" y="11" width="1" height="1" fill="#ffffff"/><rect x="6" y="11" width="1" height="1" fill="#ffffff"/><rect x="7" y="11" width="1" height="1" fill="#ffffff"/><rect x="4" y="1" width="1" height="1" fill="#404040"/><rect x="5" y="1" width="1" height="1" fill="#404040"/><rect x="6" y="1" width="1" height="1" fill="#404040"/><rect x="7" y="1" width="1" height="1" fill="#404040"/><rect x="2" y="2" width="1" height="1" fill="#404040"/><rect x="3" y="2" width="1" height="1" fill="#404040"/><rect x="8" y="2" width="1" height="1" fill="#404040"/><rect x="9" y="2" width="1" height="1" fill="#404040"/><rect x="2" y="3" width="1" height="1" fill="#404040"/><rect x="9" y="3" width="1" height="1" fill="#d4d0c8"/><rect x="1" y="4" width="1" height="1" fill="#404040"/><rect x="10" y="4" width="1" height="1" fill="#d4d0c8"/><rect x="1" y="5" width="1" height="1" fill="#404040"/><rect x="10" y="5" width="1" height="1" fill="#d4d0c8"/><rect x="1" y="6" width="1" height="1" fill="#404040"/><rect x="10" y="6" width="1" height="1" fill="#d4d0c8"/><rect x="1" y="7" width="1" height="1" fill="#404040"/><rect x="10" y="7" width="1" height="1" fill="#d4d0c8"/><rect x="2" y="8" width="1" height="1" fill="#404040"/><rect x="9" y="8" width="1" height="1" fill="#d4d0c8"/><rect x="2" y="9" width="1" height="1" fill="#404040"/><rect x="3" y="9" width="1" height="1" fill="#d4d0c8"/><rect x="8" y="9" width="1" height="1" fill="#d4d0c8"/><rect x="9" y="9" width="1" height="1" fill="#d4d0c8"/><rect x="4" y="10" width="1" height="1" fill="#d4d0c8"/><rect x="5" y="10" width="1" height="1" fill="#d4d0c8"/><rect x="6" y="10" width="1" height="1" fill="#d4d0c8"/><rect x="7" y="10" width="1" height="1" fill="#d4d0c8"/></svg><svg style="position:absolute;left:472px;top:197px" width="12" height="12" viewBox="0 0 12 12" shape-rendering="crispEdges"><rect x="4" y="2" width="1" height="1" fill="#e4e2de"/><rect x="5" y="2" width="1" height="1" fill="#e4e2de"/><rect x="6" y="2" width="1" height="1" fill="#e4e2de"/><rect x="7" y="2" width="1" height="1" fill="#e4e2de"/><rect x="3" y="3" width="1" height="1" fill="#e4e2de"/><rect x="4" y="3" width="1" height="1" fill="#e4e2de"/><rect x="5" y="3" width="1" height="1" fill="#e4e2de"/><rect x="6" y="3" width="1" height="1" fill="#e4e2de"/><rect x="7" y="3" width="1" height="1" fill="#e4e2de"/><rect x="8" y="3" width="1" height="1" fill="#e4e2de"/><rect x="2" y="4" width="1" height="1" fill="#e4e2de"/><rect x="3" y="4" width="1" height="1" fill="#e4e2de"/><rect x="4" y="4" width="1" height="1" fill="#e4e2de"/><rect x="5" y="4" width="1" height="1" fill="#e4e2de"/><rect x="6" y="4" width="1" height="1" fill="#e4e2de"/><rect x="7" y="4" width="1" height="1" fill="#e4e2de"/><rect x="8" y="4" width="1" height="1" fill="#e4e2de"/><rect x="9" y="4" width="1" height="1" fill="#e4e2de"/><rect x="2" y="5" width="1" height="1" fill="#e4e2de"/><rect x="3" y="5" width="1" height="1" fill="#e4e2de"/><rect x="4" y="5" width="1" height="1" fill="#e4e2de"/><rect x="5" y="5" width="1" height="1" fill="#e4e2de"/><rect x="6" y="5" width="1" height="1" fill="#e4e2de"/><rect x="7" y="5" width="1" height="1" fill="#e4e2de"/><rect x="8" y="5" width="1" height="1" fill="#e4e2de"/><rect x="9" y="5" width="1" height="1" fill="#e4e2de"/><rect x="2" y="6" width="1" height="1" fill="#e4e2de"/><rect x="3" y="6" width="1" height="1" fill="#e4e2de"/><rect x="4" y="6" width="1" height="1" fill="#e4e2de"/><rect x="5" y="6" width="1" height="1" fill="#e4e2de"/><rect x="6" y="6" width="1" height="1" fill="#e4e2de"/><rect x="7" y="6" width="1" height="1" fill="#e4e2de"/><rect x="8" y="6" width="1" height="1" fill="#e4e2de"/><rect x="9" y="6" width="1" height="1" fill="#e4e2de"/><rect x="2" y="7" width="1" height="1" fill="#e4e2de"/><rect x="3" y="7" width="1" height="1" fill="#e4e2de"/><rect x="4" y="7" width="1" height="1" fill="#e4e2de"/><rect x="5" y="7" width="1" height="1" fill="#e4e2de"/><rect x="6" y="7" width="1" height="1" fill="#e4e2de"/><rect x="7" y="7" width="1" height="1" fill="#e4e2de"/><rect x="8" y="7" width="1" height="1" fill="#e4e2de"/><rect x="9" y="7" width="1" height="1" fill="#e4e2de"/><rect x="3" y="8" width="1" height="1" fill="#e4e2de"/><rect x="4" y="8" width="1" height="1" fill="#e4e2de"/><rect x="5" y="8" width="1" height="1" fill="#e4e2de"/><rect x="6" y="8" width="1" height="1" fill="#e4e2de"/><rect x="7" y="8" width="1" height="1" fill="#e4e2de"/><rect x="8" y="8" width="1" height="1" fill="#e4e2de"/><rect x="4" y="9" width="1" height="1" fill="#e4e2de"/><rect x="5" y="9" width="1" height="1" fill="#e4e2de"/><rect x="6" y="9" width="1" height="1" fill="#e4e2de"/><rect x="7" y="9" width="1" height="1" fill="#e4e2de"/><rect x="4" y="0" width="1" height="1" fill="#808080"/><rect x="5" y="0" width="1" height="1" fill="#808080"/><rect x="6" y="0" width="1" height="1" fill="#808080"/><rect x="7" y="0" width="1" height="1" fill="#808080"/><rect x="2" y="1" width="1" height="1" fill="#808080"/><rect x="3" y="1" width="1" height="1" fill="#808080"/><rect x="8" y="1" width="1" height="1" fill="#808080"/><rect x="9" y="1" width="1" height="1" fill="#808080"/><rect x="1" y="2" width="1" height="1" fill="#808080"/><rect x="10" y="2" width="1" height="1" fill="#ffffff"/><rect x="1" y="3" width="1" height="1" fill="#808080"/><rect x="10" y="3" width="1" height="1" fill="#ffffff"/><rect x="0" y="4" width="1" height="1" fill="#808080"/><rect x="11" y="4" width="1" height="1" fill="#ffffff"/><rect x="0" y="5" width="1" height="1" fill="#808080"/><rect x="11" y="5" width="1" height="1" fill="#ffffff"/><rect x="0" y="6" width="1" height="1" fill="#808080"/><rect x="11" y="6" width="1" height="1" fill="#ffffff"/><rect x="0" y="7" width="1" height="1" fill="#808080"/><rect x="11" y="7" width="1" height="1" fill="#ffffff"/><rect x="1" y="8" width="1" height="1" fill="#808080"/><rect x="10" y="8" width="1" height="1" fill="#ffffff"/><rect x="1" y="9" width="1" height="1" fill="#808080"/><rect x="10" y="9" width="1" height="1" fill="#ffffff"/><rect x="2" y="10" width="1" height="1" fill="#ffffff"/><rect x="3" y="10" width="1" height="1" fill="#ffffff"/><rect x="8" y="10" width="1" height="1" fill="#ffffff"/><rect x="9" y="10" width="1" height="1" fill="#ffffff"/><rect x="4" y="11" width="1" height="1" fill="#ffffff"/><rect x="5" y="11" width="1" height="1" fill="#ffffff"/><rect x="6" y="11" width="1" height="1" fill="#ffffff"/><rect x="7" y="11" width="1" height="1" fill="#ffffff"/><rect x="4" y="1" width="1" height="1" fill="#404040"/><rect x="5" y="1" width="1" height="1" fill="#404040"/><rect x="6" y="1" width="1" height="1" fill="#404040"/><rect x="7" y="1" width="1" height="1" fill="#404040"/><rect x="2" y="2" width="1" height="1" fill="#404040"/><rect x="3" y="2" width="1" height="1" fill="#404040"/><rect x="8" y="2" width="1" height="1" fill="#404040"/><rect x="9" y="2" width="1" height="1" fill="#404040"/><rect x="2" y="3" width="1" height="1" fill="#404040"/><rect x="9" y="3" width="1" height="1" fill="#d4d0c8"/><rect x="1" y="4" width="1" height="1" fill="#404040"/><rect x="10" y="4" width="1" height="1" fill="#d4d0c8"/><rect x="1" y="5" width="1" height="1" fill="#404040"/><rect x="10" y="5" width="1" height="1" fill="#d4d0c8"/><rect x="1" y="6" width="1" height="1" fill="#404040"/><rect x="10" y="6" width="1" height="1" fill="#d4d0c8"/><rect x="1" y="7" width="1" height="1" fill="#404040"/><rect x="10" y="7" width="1" height="1" fill="#d4d0c8"/><rect x="2" y="8" width="1" height="1" fill="#404040"/><rect x="9" y="8" width="1" height="1" fill="#d4d0c8"/><rect x="2" y="9" width="1" height="1" fill="#404040"/><rect x="3" y="9" width="1" height="1" fill="#d4d0c8"/><rect x="8" y="9" width="1" height="1" fill="#d4d0c8"/><rect x="9" y="9" width="1" height="1" fill="#d4d0c8"/><rect x="4" y="10" width="1" height="1" fill="#d4d0c8"/><rect x="5" y="10" width="1" height="1" fill="#d4d0c8"/><rect x="6" y="10" width="1" height="1" fill="#d4d0c8"/><rect x="7" y="10" width="1" height="1" fill="#d4d0c8"/><rect x="5" y="4" width="2" height="1" fill="#000"/><rect x="4" y="5" width="4" height="2" fill="#000"/><rect x="5" y="7" width="2" height="1" fill="#000"/></svg><div class="t" style="left:489px;top:182px;font-size:12px;transform:scaleX(0.917);transform-origin:0 0;color:#000;font-weight:400;">Чтение</div><div class="t" style="left:489px;top:198px;font-size:12px;transform:scaleX(0.917);transform-origin:0 0;color:#000;font-weight:400;">Запись</div><div style="left:471px;top:222px;width:13px;height:13px;background:#ffffff;"></div><div style="left:471px;top:222px;width:12px;height:12px;background:#808080;"></div><div style="left:472px;top:223px;width:11px;height:11px;background:#d4d0c8;"></div><div style="left:472px;top:223px;width:10px;height:10px;background:#404040;"></div><div style="left:473px;top:224px;width:9px;height:9px;background:#e4e2de;"></div><div class="t" style="left:489px;top:223px;font-size:12px;transform:scaleX(0.917);transform-origin:0 0;color:#000;font-weight:400;">Короткий рабочий ход</div><div style="left:471px;top:242px;width:62px;height:20px;background:#ffffff;"></div><div style="left:471px;top:242px;width:61px;height:19px;background:#808080;"></div><div style="left:472px;top:243px;width:60px;height:18px;background:#d4d0c8;"></div><div style="left:472px;top:243px;width:59px;height:17px;background:#404040;"></div><div style="left:473px;top:244px;width:58px;height:16px;background:#d4d0c8;"></div><div class="t" style="left:474px;top:246px;font-size:12px;transform:scaleX(0.917);transform-origin:0 0;color:#888888;font-weight:400;">40</div><div style="left:517px;top:244px;width:14px;height:8px;background:#404040;"></div><div style="left:517px;top:244px;width:13px;height:7px;background:#ffffff;"></div><div style="left:518px;top:245px;width:12px;height:6px;background:#808080;"></div><div style="left:518px;top:245px;width:11px;height:5px;background:#d4d0c8;"></div><div style="left:517px;top:252px;width:14px;height:8px;background:#404040;"></div><div style="left:517px;top:252px;width:13px;height:7px;background:#ffffff;"></div><div style="left:518px;top:253px;width:12px;height:6px;background:#808080;"></div><div style="left:518px;top:253px;width:11px;height:5px;background:#d4d0c8;"></div><svg style="position:absolute;left:522px;top:246px" width="4" height="3" viewBox="0 0 4 3" shape-rendering="crispEdges"><rect x="1" y="0" width="1" height="1" fill="#808080"/><rect x="0" y="1" width="3" height="1" fill="#808080"/><rect x="2" y="1" width="1" height="1" fill="#808080"/><rect x="1" y="1" width="1" height="1" fill="#808080"/><rect x="2" y="0" width="1" height="1" fill="#fff"/><rect x="3" y="1" width="1" height="1" fill="#fff"/></svg><svg style="position:absolute;left:522px;top:254px" width="4" height="3" viewBox="0 0 4 3" shape-rendering="crispEdges"><rect x="0" y="0" width="3" height="1" fill="#808080"/><rect x="1" y="1" width="1" height="1" fill="#808080"/><rect x="3" y="0" width="1" height="1" fill="#fff"/><rect x="2" y="1" width="1" height="1" fill="#fff"/></svg><div class="t" style="left:544px;top:247px;font-size:12px;transform:scaleX(0.917);transform-origin:0 0;color:#000;font-weight:400;">ГБ</div><div style="left:471px;top:271px;width:13px;height:13px;background:#ffffff;"></div><div style="left:471px;top:271px;width:12px;height:12px;background:#808080;"></div><div style="left:472px;top:272px;width:11px;height:11px;background:#d4d0c8;"></div><div style="left:472px;top:272px;width:10px;height:10px;background:#404040;"></div><div style="left:473px;top:273px;width:9px;height:9px;background:#e4e2de;"></div><svg style="position:absolute;left:474px;top:274px" width="7" height="7" viewBox="0 0 7 7" shape-rendering="crispEdges"><rect x="6" y="0" width="1" height="1" fill="#000"/><rect x="5" y="1" width="1" height="1" fill="#000"/><rect x="6" y="1" width="1" height="1" fill="#000"/><rect x="0" y="2" width="1" height="1" fill="#000"/><rect x="4" y="2" width="1" height="1" fill="#000"/><rect x="5" y="2" width="1" height="1" fill="#000"/><rect x="6" y="2" width="1" height="1" fill="#000"/><rect x="0" y="3" width="1" height="1" fill="#000"/><rect x="1" y="3" width="1" height="1" fill="#000"/><rect x="3" y="3" width="1" height="1" fill="#000"/><rect x="4" y="3" width="1" height="1" fill="#000"/><rect x="5" y="3" width="1" height="1" fill="#000"/><rect x="0" y="4" width="1" height="1" fill="#000"/><rect x="1" y="4" width="1" height="1" fill="#000"/><rect x="2" y="4" width="1" height="1" fill="#000"/><rect x="3" y="4" width="1" height="1" fill="#000"/><rect x="4" y="4" width="1" height="1" fill="#000"/><rect x="1" y="5" width="1" height="1" fill="#000"/><rect x="2" y="5" width="1" height="1" fill="#000"/><rect x="3" y="5" width="1" height="1" fill="#000"/><rect x="2" y="6" width="1" height="1" fill="#000"/></svg><div class="t" style="left:489px;top:272px;font-size:12px;transform:scaleX(0.917);transform-origin:0 0;color:#000;font-weight:400;">Скорость передачи данных</div><div class="t" style="left:471px;top:290px;font-size:12px;transform:scaleX(0.917);transform-origin:0 0;color:#000;font-weight:400;">Минимальная скорость</div><div style="left:471px;top:304px;width:93px;height:16px;background:#ffffff;"></div><div style="left:471px;top:304px;width:92px;height:15px;background:#808080;"></div><div style="left:472px;top:305px;width:91px;height:14px;background:#000;"></div><div class="t" style="left:472px;top:305px;width:91px;text-align:center;font-size:12px;font-weight:700;letter-spacing:0.4px;color:#00c4ff;line-height:14px">312.6 MB/s</div><div class="t" style="left:471px;top:322px;font-size:12px;transform:scaleX(0.917);transform-origin:0 0;color:#000;font-weight:400;">Максимальная скорость</div><div style="left:471px;top:336px;width:93px;height:16px;background:#ffffff;"></div><div style="left:471px;top:336px;width:92px;height:15px;background:#808080;"></div><div style="left:472px;top:337px;width:91px;height:14px;background:#000;"></div><div class="t" style="left:472px;top:337px;width:91px;text-align:center;font-size:12px;font-weight:700;letter-spacing:0.4px;color:#00c4ff;line-height:14px">368.9 MB/s</div><div class="t" style="left:470px;top:353px;font-size:12px;transform:scaleX(0.917);transform-origin:0 0;color:#000;font-weight:400;">Средняя скорость</div><div style="left:471px;top:367px;width:93px;height:16px;background:#ffffff;"></div><div style="left:471px;top:367px;width:92px;height:15px;background:#808080;"></div><div style="left:472px;top:368px;width:91px;height:14px;background:#000;"></div><div class="t" style="left:472px;top:368px;width:91px;text-align:center;font-size:12px;font-weight:700;letter-spacing:0.4px;color:#00c4ff;line-height:14px">324.3 MB/s</div><div style="left:471px;top:396px;width:13px;height:13px;background:#ffffff;"></div><div style="left:471px;top:396px;width:12px;height:12px;background:#808080;"></div><div style="left:472px;top:397px;width:11px;height:11px;background:#d4d0c8;"></div><div style="left:472px;top:397px;width:10px;height:10px;background:#404040;"></div><div style="left:473px;top:398px;width:9px;height:9px;background:#e4e2de;"></div><svg style="position:absolute;left:474px;top:399px" width="7" height="7" viewBox="0 0 7 7" shape-rendering="crispEdges"><rect x="6" y="0" width="1" height="1" fill="#000"/><rect x="5" y="1" width="1" height="1" fill="#000"/><rect x="6" y="1" width="1" height="1" fill="#000"/><rect x="0" y="2" width="1" height="1" fill="#000"/><rect x="4" y="2" width="1" height="1" fill="#000"/><rect x="5" y="2" width="1" height="1" fill="#000"/><rect x="6" y="2" width="1" height="1" fill="#000"/><rect x="0" y="3" width="1" height="1" fill="#000"/><rect x="1" y="3" width="1" height="1" fill="#000"/><rect x="3" y="3" width="1" height="1" fill="#000"/><rect x="4" y="3" width="1" height="1" fill="#000"/><rect x="5" y="3" width="1" height="1" fill="#000"/><rect x="0" y="4" width="1" height="1" fill="#000"/><rect x="1" y="4" width="1" height="1" fill="#000"/><rect x="2" y="4" width="1" height="1" fill="#000"/><rect x="3" y="4" width="1" height="1" fill="#000"/><rect x="4" y="4" width="1" height="1" fill="#000"/><rect x="1" y="5" width="1" height="1" fill="#000"/><rect x="2" y="5" width="1" height="1" fill="#000"/><rect x="3" y="5" width="1" height="1" fill="#000"/><rect x="2" y="6" width="1" height="1" fill="#000"/></svg><div class="t" style="left:489px;top:397px;font-size:12px;transform:scaleX(0.917);transform-origin:0 0;color:#000;font-weight:400;">Время доступа</div><div style="left:471px;top:411px;width:93px;height:16px;background:#ffffff;"></div><div style="left:471px;top:411px;width:92px;height:15px;background:#808080;"></div><div style="left:472px;top:412px;width:91px;height:14px;background:#000;"></div><div class="t" style="left:472px;top:412px;width:91px;text-align:center;font-size:12px;font-weight:700;letter-spacing:0.4px;color:#ffff00;line-height:14px">0.913 ms</div><div style="left:471px;top:430px;width:13px;height:13px;background:#ffffff;"></div><div style="left:471px;top:430px;width:12px;height:12px;background:#808080;"></div><div style="left:472px;top:431px;width:11px;height:11px;background:#d4d0c8;"></div><div style="left:472px;top:431px;width:10px;height:10px;background:#404040;"></div><div style="left:473px;top:432px;width:9px;height:9px;background:#e4e2de;"></div><svg style="position:absolute;left:474px;top:433px" width="7" height="7" viewBox="0 0 7 7" shape-rendering="crispEdges"><rect x="6" y="0" width="1" height="1" fill="#000"/><rect x="5" y="1" width="1" height="1" fill="#000"/><rect x="6" y="1" width="1" height="1" fill="#000"/><rect x="0" y="2" width="1" height="1" fill="#000"/><rect x="4" y="2" width="1" height="1" fill="#000"/><rect x="5" y="2" width="1" height="1" fill="#000"/><rect x="6" y="2" width="1" height="1" fill="#000"/><rect x="0" y="3" width="1" height="1" fill="#000"/><rect x="1" y="3" width="1" height="1" fill="#000"/><rect x="3" y="3" width="1" height="1" fill="#000"/><rect x="4" y="3" width="1" height="1" fill="#000"/><rect x="5" y="3" width="1" height="1" fill="#000"/><rect x="0" y="4" width="1" height="1" fill="#000"/><rect x="1" y="4" width="1" height="1" fill="#000"/><rect x="2" y="4" width="1" height="1" fill="#000"/><rect x="3" y="4" width="1" height="1" fill="#000"/><rect x="4" y="4" width="1" height="1" fill="#000"/><rect x="1" y="5" width="1" height="1" fill="#000"/><rect x="2" y="5" width="1" height="1" fill="#000"/><rect x="3" y="5" width="1" height="1" fill="#000"/><rect x="2" y="6" width="1" height="1" fill="#000"/></svg><div class="t" style="left:489px;top:431px;font-size:12px;transform:scaleX(0.917);transform-origin:0 0;color:#000;font-weight:400;">Пиковая скорость</div><div style="left:471px;top:445px;width:93px;height:16px;background:#ffffff;"></div><div style="left:471px;top:445px;width:92px;height:15px;background:#808080;"></div><div style="left:472px;top:446px;width:91px;height:14px;background:#000;"></div><div class="t" style="left:472px;top:446px;width:91px;text-align:center;font-size:12px;font-weight:700;letter-spacing:0.4px;color:#ffffff;line-height:14px">137.2 MB/s</div><div class="t" style="left:471px;top:464px;font-size:12px;transform:scaleX(0.917);transform-origin:0 0;color:#000;font-weight:400;">Загрузка процессора</div><div style="left:471px;top:478px;width:93px;height:16px;background:#ffffff;"></div><div style="left:471px;top:478px;width:92px;height:15px;background:#808080;"></div><div style="left:472px;top:479px;width:91px;height:14px;background:#000;"></div><div class="t" style="left:472px;top:479px;width:91px;text-align:center;font-size:12px;font-weight:700;letter-spacing:0.4px;color:#ffffff;line-height:14px">6.7%</div></body></html>
